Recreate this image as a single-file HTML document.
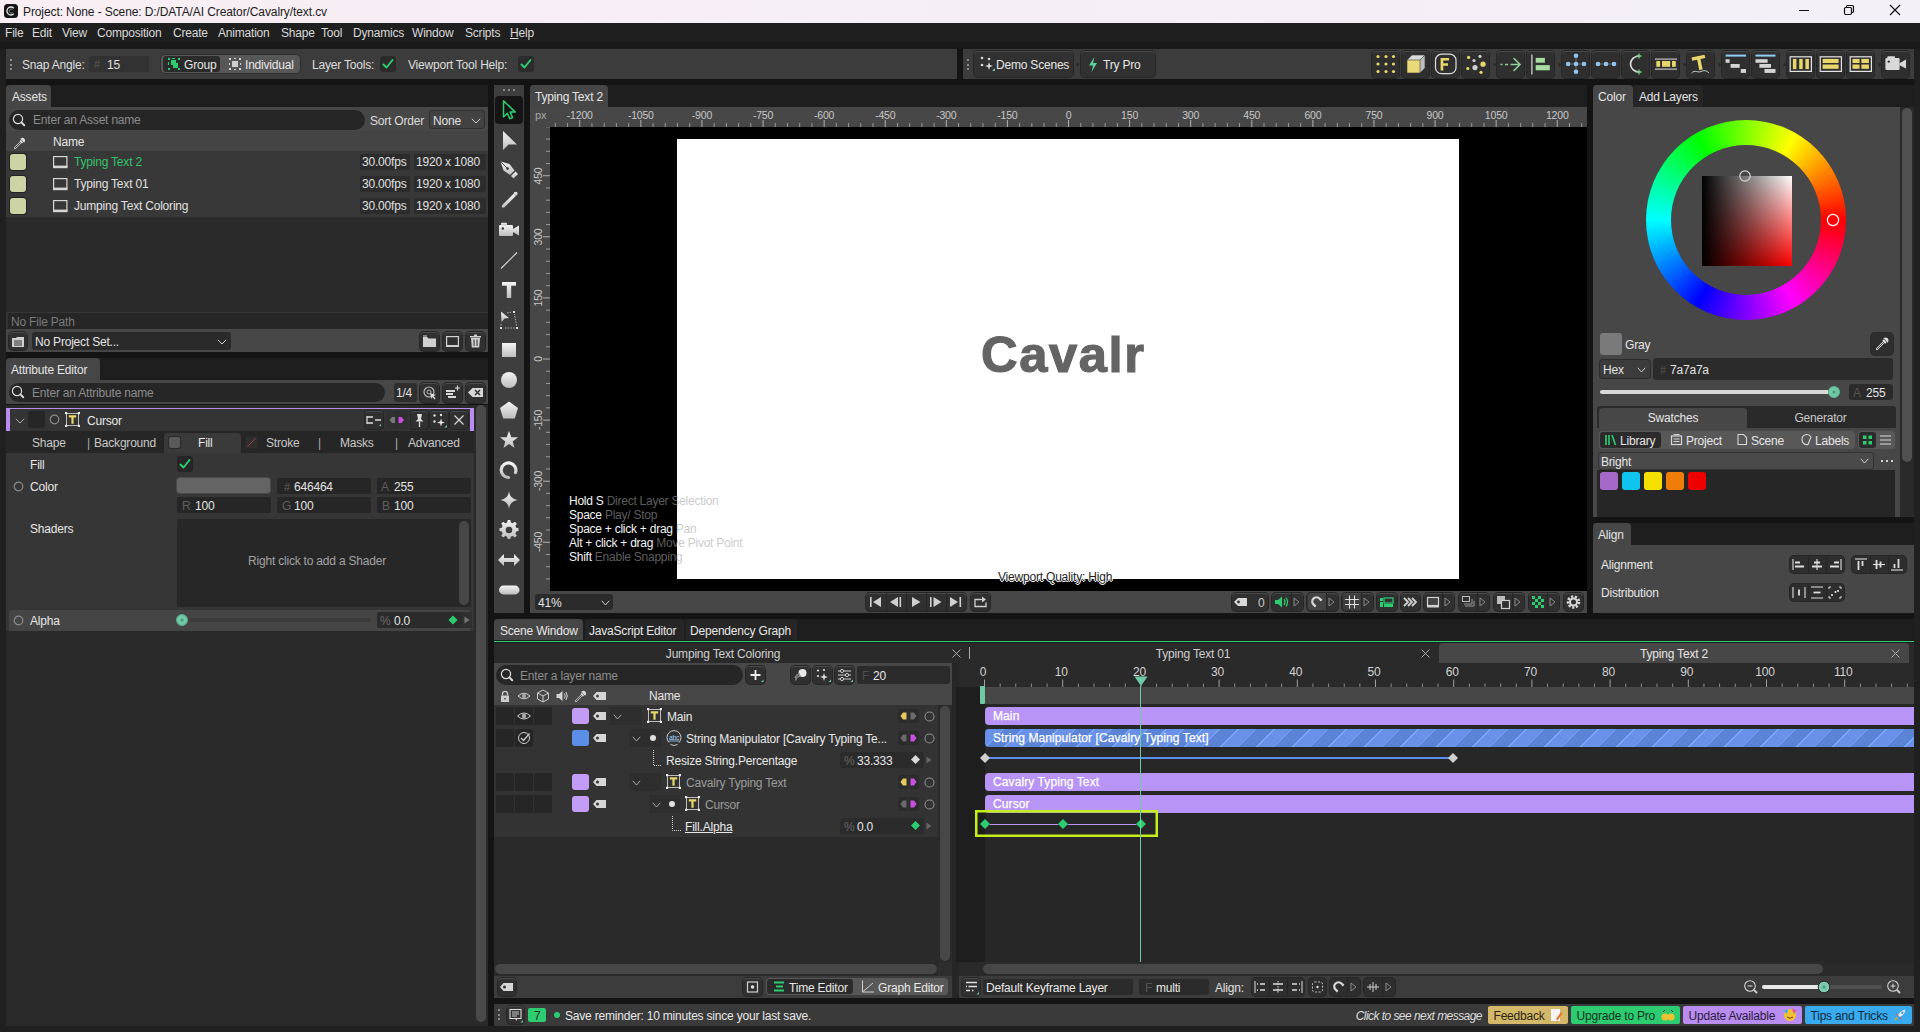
<!DOCTYPE html><html><head><meta charset="utf-8"><style>
html,body{margin:0;padding:0;}
body{width:1920px;height:1032px;overflow:hidden;position:relative;background:#202020;font-family:"Liberation Sans",sans-serif;}
.a{position:absolute;}
.t{white-space:nowrap;letter-spacing:-0.2px;}
</style></head><body>
<div class="a" style="left:0px;top:0px;width:1920px;height:23px;background:linear-gradient(to right,#f8eef4,#f6eff5 40%,#f3f0f7);"></div>
<svg class="a" style="left:3px;top:3px;" width="16" height="16" viewBox="0 0 16 16"><rect x="1" y="1" width="14" height="14" rx="3.5" fill="#151515"/><path d="M10.8 5.2 A4 4 0 1 0 10.8 10.8" fill="none" stroke="#e8e8e8" stroke-width="1.3"/><path d="M9.6 6.6 A2 2 0 1 0 9.6 9.4" fill="none" stroke="#999" stroke-width="0.8"/></svg>
<div class="a t" style="left:23px;top:5.84px;font-size:12px;line-height:12px;color:#1b1b1b;letter-spacing:-0.1px">Project: None - Scene: D:/DATA/AI Creator/Cavalry/text.cv</div>
<div class="a" style="left:1799px;top:10px;width:10px;height:1px;background:#111;"></div>
<svg class="a" style="left:1842px;top:3px;" width="14" height="14" viewBox="0 0 14 14"><rect x="2.5" y="4.5" width="7" height="7" rx="1.2" fill="none" stroke="#111" stroke-width="1.2"/><path d="M4.5 4.5 V3.8 a1.3 1.3 0 0 1 1.3-1.3 H10.2 a1.3 1.3 0 0 1 1.3 1.3 V8.2 a1.3 1.3 0 0 1 -1.3 1.3 H9.5" fill="none" stroke="#111" stroke-width="1.2"/></svg>
<svg class="a" style="left:1888px;top:3px;" width="14" height="14" viewBox="0 0 14 14"><path d="M2 2 L12 12 M12 2 L2 12" stroke="#111" stroke-width="1.2"/></svg>
<div class="a" style="left:0px;top:23px;width:1920px;height:19px;background:#1f1f1f;"></div>
<div class="a" style="left:0px;top:42px;width:1920px;height:7px;background:#1a1a1a;"></div>
<div class="a t" style="left:5px;top:26.84px;font-size:12px;line-height:12px;color:#d9d9d9;">File</div>
<div class="a t" style="left:32px;top:26.84px;font-size:12px;line-height:12px;color:#d9d9d9;">Edit</div>
<div class="a t" style="left:62px;top:26.84px;font-size:12px;line-height:12px;color:#d9d9d9;">View</div>
<div class="a t" style="left:97px;top:26.84px;font-size:12px;line-height:12px;color:#d9d9d9;">Composition</div>
<div class="a t" style="left:173px;top:26.84px;font-size:12px;line-height:12px;color:#d9d9d9;">Create</div>
<div class="a t" style="left:218px;top:26.84px;font-size:12px;line-height:12px;color:#d9d9d9;">Animation</div>
<div class="a t" style="left:281px;top:26.84px;font-size:12px;line-height:12px;color:#d9d9d9;">Shape</div>
<div class="a t" style="left:321px;top:26.84px;font-size:12px;line-height:12px;color:#d9d9d9;">Tool</div>
<div class="a t" style="left:353px;top:26.84px;font-size:12px;line-height:12px;color:#d9d9d9;">Dynamics</div>
<div class="a t" style="left:412px;top:26.84px;font-size:12px;line-height:12px;color:#d9d9d9;">Window</div>
<div class="a t" style="left:465px;top:26.84px;font-size:12px;line-height:12px;color:#d9d9d9;">Scripts</div>
<div class="a t" style="left:510px;top:26.84px;font-size:12px;line-height:12px;color:#d9d9d9;"><u>H</u>elp</div>
<div class="a" style="left:957px;top:49px;width:6px;height:30px;background:#141414;"></div>
<div class="a" style="left:6px;top:79px;width:1908px;height:947px;background:#141414;"></div>
<div class="a" style="left:6px;top:49px;width:951px;height:30px;background:#3c3c3c;"></div>
<div class="a" style="left:963px;top:49px;width:951px;height:30px;background:#3c3c3c;"></div>
<div class="a" style="left:10px;top:59.0px;width:2px;height:2px;background:#8a8a8a;"></div>
<div class="a" style="left:10px;top:63.5px;width:2px;height:2px;background:#8a8a8a;"></div>
<div class="a" style="left:10px;top:68.0px;width:2px;height:2px;background:#8a8a8a;"></div>
<div class="a t" style="left:22px;top:58.84px;font-size:12px;line-height:12px;color:#dedede;">Snap Angle:</div>
<div class="a" style="left:89px;top:56px;width:60px;height:16px;background:#323232;border-radius:3px"></div>
<div class="a t" style="left:94px;top:58.69px;font-size:11px;line-height:11px;color:#5c5c5c;">#</div>
<div class="a t" style="left:107px;top:58.84px;font-size:12px;line-height:12px;color:#e0e0e0;">15</div>
<div class="a" style="left:161px;top:55px;width:139px;height:18px;background:#575757;border-radius:4px;box-shadow:0 0 0 1px #2e2e2e"></div>
<div class="a" style="left:163px;top:56px;width:57px;height:16px;background:#2b2b2b;border-radius:3px"></div>
<svg class="a" style="left:167px;top:57px;" width="14" height="14" viewBox="0 0 14 14"><g fill="#2ecc71"><rect x="1" y="1" width="2" height="2"/><rect x="11" y="1" width="2" height="2"/><rect x="1" y="11" width="2" height="2"/><rect x="11" y="11" width="2" height="2"/><rect x="4" y="3" width="5" height="5"/><rect x="6" y="6" width="5" height="5"/><rect x="5" y="1" width="3" height="1"/><rect x="1" y="5" width="1" height="3"/></g></svg>
<div class="a t" style="left:184px;top:58.84px;font-size:12px;line-height:12px;color:#e6e6e6;">Group</div>
<svg class="a" style="left:228px;top:57px;" width="14" height="14" viewBox="0 0 14 14"><g fill="#cfcfcf"><rect x="1" y="1" width="2" height="2"/><rect x="11" y="1" width="2" height="2"/><rect x="1" y="11" width="2" height="2"/><rect x="11" y="11" width="2" height="2"/><rect x="4" y="4" width="6" height="6"/><rect x="6" y="1" width="2" height="1"/><rect x="6" y="12" width="2" height="1"/><rect x="1" y="6" width="1" height="2"/><rect x="12" y="6" width="1" height="2"/></g></svg>
<div class="a t" style="left:245px;top:58.84px;font-size:12px;line-height:12px;color:#e6e6e6;">Individual</div>
<div class="a t" style="left:312px;top:58.84px;font-size:12px;line-height:12px;color:#dedede;">Layer Tools:</div>
<div class="a" style="left:380px;top:56px;width:16px;height:16px;background:#2b2b2b;border-radius:3px"></div>
<svg class="a" style="left:380px;top:56px;" width="16" height="16" viewBox="0 0 16 16"><path d="M3.5 8.5 L6.5 11.5 L12.5 4" fill="none" stroke="#2ecc71" stroke-width="2" stroke-linecap="round" stroke-linejoin="round"/></svg>
<div class="a t" style="left:408px;top:58.84px;font-size:12px;line-height:12px;color:#dedede;">Viewport Tool Help:</div>
<div class="a" style="left:518px;top:56px;width:16px;height:16px;background:#2b2b2b;border-radius:3px"></div>
<svg class="a" style="left:518px;top:56px;" width="16" height="16" viewBox="0 0 16 16"><path d="M3.5 8.5 L6.5 11.5 L12.5 4" fill="none" stroke="#2ecc71" stroke-width="2" stroke-linecap="round" stroke-linejoin="round"/></svg>
<div class="a" style="left:967px;top:59.0px;width:2px;height:2px;background:#8a8a8a;"></div>
<div class="a" style="left:967px;top:63.5px;width:2px;height:2px;background:#8a8a8a;"></div>
<div class="a" style="left:967px;top:68.0px;width:2px;height:2px;background:#8a8a8a;"></div>
<div class="a" style="left:974px;top:51px;width:99px;height:26px;background:#313131;border-radius:4px;box-shadow:inset 0 1px 0 #484848, 0 0 0 1px #262626"></div>
<svg class="a" style="left:979px;top:55px;" width="18" height="18" viewBox="0 0 18 18"><g fill="#d8d8d8"><circle cx="3" cy="3" r="1.3"/><circle cx="10" cy="4" r="1.3"/><circle cx="3" cy="10" r="1.3"/><path d="M10 7 L11 10 L14 11 L11 12 L10 15 L9 12 L6 11 L9 10 Z"/></g><path d="M13 16 L16 13 L16 16 Z" fill="#6fc9a6"/></svg>
<div class="a t" style="left:996px;top:58.84px;font-size:12px;line-height:12px;color:#e6e6e6;">Demo Scenes</div>
<div class="a" style="left:1076px;top:63px;width:3px;height:3px;background:#2a2a2a;border-radius:2px"></div>
<div class="a" style="left:1081px;top:51px;width:74px;height:26px;background:#313131;border-radius:4px;box-shadow:inset 0 1px 0 #484848, 0 0 0 1px #262626"></div>
<svg class="a" style="left:1086px;top:56px;" width="14" height="17" viewBox="0 0 14 17"><path d="M8.5 1 L3 9.5 L7 9.5 L5.5 16 L11 7 L7 7 Z" fill="#5ed39a"/></svg>
<div class="a t" style="left:1103px;top:58.84px;font-size:12px;line-height:12px;color:#e6e6e6;">Try Pro</div>
<div class="a" style="left:1372px;top:51px;width:27px;height:27px;background:#2f2f2f;border-radius:4px;box-shadow:inset 0 1px 0 #484848, 0 0 0 1px #262626"></div>
<svg class="a" style="left:1372px;top:51px;" width="27" height="27" viewBox="0 0 27 27"><circle cx="6" cy="5.5" r="1.6" fill="#e9d66b"/><circle cx="6" cy="13" r="1.6" fill="#e9d66b"/><circle cx="6" cy="20.5" r="1.6" fill="#e9d66b"/><circle cx="14" cy="5.5" r="1.6" fill="#e9d66b"/><circle cx="14" cy="13" r="1.6" fill="#e9d66b"/><circle cx="14" cy="20.5" r="1.6" fill="#e9d66b"/><circle cx="21.5" cy="5.5" r="1.6" fill="#e9d66b"/><circle cx="21.5" cy="13" r="1.6" fill="#e9d66b"/><circle cx="21.5" cy="20.5" r="1.6" fill="#e9d66b"/></svg>
<div class="a" style="left:1402px;top:51px;width:27px;height:27px;background:#2f2f2f;border-radius:4px;box-shadow:inset 0 1px 0 #484848, 0 0 0 1px #262626"></div>
<svg class="a" style="left:1402px;top:51px;" width="27" height="27" viewBox="0 0 27 27"><polygon points="5,9 10,4 23,4 18,9" fill="#dadada"/><polygon points="18,9 23,4 23,17 18,22" fill="#bdbdbd"/><rect x="5" y="9" width="13" height="13" fill="#e9d978"/><path d="M5 9 L10 4 L23 4 L23 17 L18 22 L5 22 Z M5 9 H18 V22 M18 9 L23 4" fill="none" stroke="#3a3a3a" stroke-width="0.6"/></svg>
<div class="a" style="left:1432px;top:51px;width:27px;height:27px;background:#2f2f2f;border-radius:4px;box-shadow:inset 0 1px 0 #484848, 0 0 0 1px #262626"></div>
<svg class="a" style="left:1432px;top:51px;" width="27" height="27" viewBox="0 0 27 27"><rect x="3.5" y="3.2" width="20.5" height="19.5" rx="6" fill="none" stroke="#dedede" stroke-width="1.2"/><path d="M8.6 7 H17 V9.6 H11.3 V12.3 H16 V14.8 H11.3 V19.5 H8.6 Z" fill="#e9d66b"/></svg>
<div class="a" style="left:1462px;top:51px;width:27px;height:27px;background:#2f2f2f;border-radius:4px;box-shadow:inset 0 1px 0 #484848, 0 0 0 1px #262626"></div>
<svg class="a" style="left:1462px;top:51px;" width="27" height="27" viewBox="0 0 27 27"><circle cx="6.6" cy="6.4" r="1.6" fill="#e9d66b"/><circle cx="12" cy="9.6" r="1.6" fill="#cfcfcf"/><circle cx="18" cy="5.4" r="1.6" fill="#cfcfcf"/><circle cx="21" cy="13.2" r="2.6" fill="#e9d66b"/><circle cx="13" cy="16.6" r="2.6" fill="#cfcfcf"/><circle cx="5.8" cy="17.5" r="1.6" fill="#e9d66b"/><circle cx="19" cy="21.3" r="1.6" fill="#e9d66b"/></svg>
<div class="a" style="left:1497px;top:51px;width:27px;height:27px;background:#2f2f2f;border-radius:4px;box-shadow:inset 0 1px 0 #484848, 0 0 0 1px #262626"></div>
<svg class="a" style="left:1497px;top:51px;" width="27" height="27" viewBox="0 0 27 27"><path d="M3.5 13.5 H5.5 M8 13.5 H11 M13.5 13.5 H22.5" stroke="#8ed39b" stroke-width="1.6"/><path d="M17 7.5 L23 13.5 L17 19.5" fill="none" stroke="#8ed39b" stroke-width="1.6" stroke-linecap="round"/></svg>
<div class="a" style="left:1527px;top:51px;width:27px;height:27px;background:#2f2f2f;border-radius:4px;box-shadow:inset 0 1px 0 #484848, 0 0 0 1px #262626"></div>
<svg class="a" style="left:1527px;top:51px;" width="27" height="27" viewBox="0 0 27 27"><rect x="4.3" y="3.5" width="1.2" height="20" fill="#dcdcdc"/><rect x="8.7" y="6.9" width="9.2" height="4.8" fill="#a8dca3"/><rect x="8.7" y="14.1" width="14.1" height="5.2" fill="#a8dca3"/></svg>
<div class="a" style="left:1562px;top:51px;width:27px;height:27px;background:#2f2f2f;border-radius:4px;box-shadow:inset 0 1px 0 #484848, 0 0 0 1px #262626"></div>
<svg class="a" style="left:1562px;top:51px;" width="27" height="27" viewBox="0 0 27 27"><path d="M6 13 H22 M14 5 V21" stroke="#4c4c4c" stroke-width="2.2"/><circle cx="14" cy="4.8" r="2.3" fill="#8fc3f0"/><circle cx="6.1" cy="13" r="2.3" fill="#8fc3f0"/><circle cx="14" cy="13" r="2.3" fill="#8fc3f0"/><circle cx="22" cy="13" r="2.3" fill="#8fc3f0"/><circle cx="14" cy="20.7" r="2.3" fill="#8fc3f0"/></svg>
<div class="a" style="left:1592px;top:51px;width:27px;height:27px;background:#2f2f2f;border-radius:4px;box-shadow:inset 0 1px 0 #484848, 0 0 0 1px #262626"></div>
<svg class="a" style="left:1592px;top:51px;" width="27" height="27" viewBox="0 0 27 27"><path d="M6 13 H22" stroke="#4c4c4c" stroke-width="2.2"/><circle cx="6" cy="13" r="2.3" fill="#8fc3f0"/><circle cx="14" cy="13" r="2.3" fill="#8fc3f0"/><circle cx="22" cy="13" r="2.3" fill="#8fc3f0"/></svg>
<div class="a" style="left:1622px;top:51px;width:27px;height:27px;background:#2f2f2f;border-radius:4px;box-shadow:inset 0 1px 0 #484848, 0 0 0 1px #262626"></div>
<svg class="a" style="left:1622px;top:51px;" width="27" height="27" viewBox="0 0 27 27"><path d="M17 5 A8.5 8 0 0 0 17 21" fill="none" stroke="#d8d8d8" stroke-width="1.7"/><g stroke="#7fd08f" stroke-width="1.3"><path d="M14.5 5 H19.5 M17 2.5 V7.5 M14.5 21 H19.5 M17 18.5 V23.5"/></g></svg>
<div class="a" style="left:1652px;top:51px;width:27px;height:27px;background:#2f2f2f;border-radius:4px;box-shadow:inset 0 1px 0 #484848, 0 0 0 1px #262626"></div>
<svg class="a" style="left:1652px;top:51px;" width="27" height="27" viewBox="0 0 27 27"><rect x="3" y="7.6" width="22" height="1" fill="#e0e0e0"/><rect x="3" y="17.6" width="22" height="1" fill="#e0e0e0"/><rect x="4.3" y="10" width="3.8" height="5.8" fill="#e9d66b"/><rect x="10" y="10" width="8.2" height="5.8" fill="#e9d66b"/><rect x="20" y="10" width="3.8" height="5.8" fill="#e9d66b"/></svg>
<div class="a" style="left:1687px;top:51px;width:27px;height:27px;background:#2f2f2f;border-radius:4px;box-shadow:inset 0 1px 0 #484848, 0 0 0 1px #262626"></div>
<svg class="a" style="left:1687px;top:51px;" width="27" height="27" viewBox="0 0 27 27"><path d="M4.5 6.5 L17.5 3.8 L18.3 7 L13.5 8 L15.6 18.4 L12.2 19 L10.2 8.7 L5.2 9.7 Z" fill="#e9d66b"/><path d="M4.5 22 C8 18.5 11 22 14 20.5 C17 19 19.5 19.5 22 22" fill="none" stroke="#dcdcdc" stroke-width="0.9"/></svg>
<div class="a" style="left:1722px;top:51px;width:27px;height:27px;background:#2f2f2f;border-radius:4px;box-shadow:inset 0 1px 0 #484848, 0 0 0 1px #262626"></div>
<svg class="a" style="left:1722px;top:51px;" width="27" height="27" viewBox="0 0 27 27"><rect x="3.6" y="3.6" width="20.4" height="2" fill="#8ecff5"/><rect x="3.6" y="8.2" width="4" height="3.6" fill="#d4d4d4"/><rect x="8.6" y="13" width="9.1" height="3.8" fill="#d4d4d4"/><rect x="18.8" y="18" width="5.2" height="3.9" fill="#d4d4d4"/></svg>
<div class="a" style="left:1752px;top:51px;width:27px;height:27px;background:#2f2f2f;border-radius:4px;box-shadow:inset 0 1px 0 #484848, 0 0 0 1px #262626"></div>
<svg class="a" style="left:1752px;top:51px;" width="27" height="27" viewBox="0 0 27 27"><rect x="3.5" y="3.6" width="20" height="2" fill="#8ecff5"/><rect x="3.5" y="8.2" width="12.1" height="3.6" fill="#d4d4d4"/><rect x="7.4" y="13" width="11.6" height="3.8" fill="#d4d4d4"/><rect x="12.5" y="18" width="11" height="3.9" fill="#d4d4d4"/></svg>
<div class="a" style="left:1787px;top:51px;width:27px;height:27px;background:#2f2f2f;border-radius:4px;box-shadow:inset 0 1px 0 #484848, 0 0 0 1px #262626"></div>
<svg class="a" style="left:1787px;top:51px;" width="27" height="27" viewBox="0 0 27 27"><rect x="3.2" y="5.8" width="21.2" height="14.6" fill="none" stroke="#e4e4e4" stroke-width="1.2"/><rect x="5.9" y="7.9" width="3.5" height="10.2" fill="#e9d66b"/><rect x="12.2" y="7.9" width="3.5" height="10.2" fill="#e9d66b"/><rect x="18.4" y="7.9" width="3.5" height="10.2" fill="#e9d66b"/></svg>
<div class="a" style="left:1817px;top:51px;width:27px;height:27px;background:#2f2f2f;border-radius:4px;box-shadow:inset 0 1px 0 #484848, 0 0 0 1px #262626"></div>
<svg class="a" style="left:1817px;top:51px;" width="27" height="27" viewBox="0 0 27 27"><rect x="3.2" y="5.8" width="21.2" height="14.6" fill="none" stroke="#e4e4e4" stroke-width="1.2"/><rect x="5.6" y="7.9" width="16" height="4.1" fill="#e9d66b"/><rect x="5.6" y="13.5" width="16" height="4.3" fill="#e9d66b"/></svg>
<div class="a" style="left:1847px;top:51px;width:27px;height:27px;background:#2f2f2f;border-radius:4px;box-shadow:inset 0 1px 0 #484848, 0 0 0 1px #262626"></div>
<svg class="a" style="left:1847px;top:51px;" width="27" height="27" viewBox="0 0 27 27"><rect x="3.2" y="5.8" width="21.2" height="14.6" fill="none" stroke="#e4e4e4" stroke-width="1.2"/><rect x="5.5" y="7.9" width="7" height="4.1" fill="#e9d66b"/><rect x="14.4" y="7.9" width="7.5" height="4.1" fill="#e9d66b"/><rect x="5.5" y="13.5" width="7" height="4.3" fill="#e9d66b"/><rect x="14.4" y="13.5" width="7.5" height="4.3" fill="#e9d66b"/></svg>
<div class="a" style="left:1882px;top:51px;width:27px;height:27px;background:#2f2f2f;border-radius:4px;box-shadow:inset 0 1px 0 #484848, 0 0 0 1px #262626"></div>
<svg class="a" style="left:1882px;top:51px;" width="27" height="27" viewBox="0 0 27 27"><g fill="#d9d9d9"><rect x="3.4" y="7" width="14.2" height="12" rx="1.3"/><rect x="5.3" y="5.2" width="7.7" height="2.3" rx="0.8"/><path d="M17.5 12.2 L24 8.6 V17.6 L17.5 14.2 Z"/></g><circle cx="6.8" cy="10.6" r="1.2" fill="#333"/></svg>
<div class="a" style="left:1493px;top:63px;width:3px;height:3px;background:#2a2a2a;border-radius:2px"></div>
<div class="a" style="left:1558px;top:63px;width:3px;height:3px;background:#2a2a2a;border-radius:2px"></div>
<div class="a" style="left:1683px;top:63px;width:3px;height:3px;background:#2a2a2a;border-radius:2px"></div>
<div class="a" style="left:1718px;top:63px;width:3px;height:3px;background:#2a2a2a;border-radius:2px"></div>
<div class="a" style="left:1783px;top:63px;width:3px;height:3px;background:#2a2a2a;border-radius:2px"></div>
<div class="a" style="left:1878px;top:63px;width:3px;height:3px;background:#2a2a2a;border-radius:2px"></div>
<div class="a" style="left:6px;top:85px;width:482px;height:22px;background:#1e1e1e;"></div>
<div class="a" style="left:6px;top:85px;width:45px;height:22px;background:#464646;border-radius:4px 4px 0 0"></div>
<div class="a t" style="left:12px;top:90.84px;font-size:12px;line-height:12px;color:#e4e4e4;">Assets</div>
<div class="a" style="left:6px;top:107px;width:482px;height:24px;background:#474747;"></div>
<div class="a" style="left:9px;top:110px;width:356px;height:20px;background:#262626;border-radius:10px"></div>
<svg class="a" style="left:12px;top:113px;" width="14" height="14" viewBox="0 0 14 14"><circle cx="6" cy="6" r="4.6" fill="none" stroke="#dcdcdc" stroke-width="1.2"/><path d="M9.4 9.4 L12.2 12.2" stroke="#dcdcdc" stroke-width="2" stroke-linecap="round"/></svg>
<div class="a t" style="left:33px;top:113.84px;font-size:12px;line-height:12px;color:#8c8c8c;">Enter an Asset name</div>
<div class="a t" style="left:370px;top:114.84px;font-size:12px;line-height:12px;color:#dcdcdc;">Sort Order</div>
<div class="a" style="left:430px;top:111px;width:54px;height:17px;background:#424242;border-radius:3px;box-shadow:0 0 0 1px #303030"></div>
<div class="a t" style="left:433px;top:114.84px;font-size:12px;line-height:12px;color:#e0e0e0;">None</div>
<svg class="a" style="left:471px;top:118px;" width="10" height="6" viewBox="0 0 10 6"><path d="M0.8 0.8 L5.0 5 L9.2 0.8" fill="none" stroke="#cfcfcf" stroke-width="1"/></svg>
<div class="a" style="left:6px;top:131px;width:482px;height:20px;background:#444444;"></div>
<svg class="a" style="left:13px;top:136px;" width="14" height="14" viewBox="0 0 14 14"><path d="M2 12 L8 6" stroke="#bbb" stroke-width="2.2" stroke-linecap="round"/><path d="M2 12 L8 6" stroke="#444" stroke-width="0.9"/><path d="M7 4.5 L9.5 7 M8.5 3 A1.8 1.8 0 0 1 11 5.5 Z" stroke="#ddd" stroke-width="1.6"/></svg>
<div class="a t" style="left:53px;top:135.84px;font-size:12px;line-height:12px;color:#e6e6e6;">Name</div>
<div class="a" style="left:6px;top:151px;width:482px;height:66px;background:#383838;"></div>
<div class="a" style="left:10px;top:154px;width:16px;height:16px;background:#cdd3a5;border-radius:3px;box-shadow:0 0 0 1px #222"></div>
<svg class="a" style="left:53px;top:156px;" width="15" height="13" viewBox="0 0 15 13"><rect x="0.6" y="0.6" width="13.3" height="10" fill="none" stroke="#d6d6d6" stroke-width="1.2"/><rect x="0" y="9.6" width="14.5" height="2.6" fill="#d6d6d6"/></svg>
<div class="a t" style="left:74px;top:156.34px;font-size:12px;line-height:12px;color:#35c46a;">Typing Text 2</div>
<div class="a" style="left:360px;top:154px;width:50px;height:16px;background:#2c2c2c;border-radius:2px"></div>
<div class="a t" style="left:362px;top:155.84px;font-size:12px;line-height:12px;color:#e0e0e0;">30.00fps</div>
<div class="a" style="left:414px;top:154px;width:72px;height:16px;background:#2c2c2c;border-radius:2px"></div>
<div class="a t" style="left:416px;top:155.84px;font-size:12px;line-height:12px;color:#e0e0e0;">1920 x 1080</div>
<div class="a" style="left:10px;top:176px;width:16px;height:16px;background:#cdd3a5;border-radius:3px;box-shadow:0 0 0 1px #222"></div>
<svg class="a" style="left:53px;top:178px;" width="15" height="13" viewBox="0 0 15 13"><rect x="0.6" y="0.6" width="13.3" height="10" fill="none" stroke="#d6d6d6" stroke-width="1.2"/><rect x="0" y="9.6" width="14.5" height="2.6" fill="#d6d6d6"/></svg>
<div class="a t" style="left:74px;top:178.34px;font-size:12px;line-height:12px;color:#e0e0e0;">Typing Text 01</div>
<div class="a" style="left:360px;top:176px;width:50px;height:16px;background:#2c2c2c;border-radius:2px"></div>
<div class="a t" style="left:362px;top:177.84px;font-size:12px;line-height:12px;color:#e0e0e0;">30.00fps</div>
<div class="a" style="left:414px;top:176px;width:72px;height:16px;background:#2c2c2c;border-radius:2px"></div>
<div class="a t" style="left:416px;top:177.84px;font-size:12px;line-height:12px;color:#e0e0e0;">1920 x 1080</div>
<div class="a" style="left:10px;top:198px;width:16px;height:16px;background:#cdd3a5;border-radius:3px;box-shadow:0 0 0 1px #222"></div>
<svg class="a" style="left:53px;top:200px;" width="15" height="13" viewBox="0 0 15 13"><rect x="0.6" y="0.6" width="13.3" height="10" fill="none" stroke="#d6d6d6" stroke-width="1.2"/><rect x="0" y="9.6" width="14.5" height="2.6" fill="#d6d6d6"/></svg>
<div class="a t" style="left:74px;top:200.34px;font-size:12px;line-height:12px;color:#e0e0e0;">Jumping Text Coloring</div>
<div class="a" style="left:360px;top:198px;width:50px;height:16px;background:#2c2c2c;border-radius:2px"></div>
<div class="a t" style="left:362px;top:199.84px;font-size:12px;line-height:12px;color:#e0e0e0;">30.00fps</div>
<div class="a" style="left:414px;top:198px;width:72px;height:16px;background:#2c2c2c;border-radius:2px"></div>
<div class="a t" style="left:416px;top:199.84px;font-size:12px;line-height:12px;color:#e0e0e0;">1920 x 1080</div>
<div class="a" style="left:6px;top:217px;width:482px;height:95px;background:#2a2a2a;"></div>
<div class="a" style="left:6px;top:312px;width:482px;height:17px;background:#262626;box-shadow:inset 0 1px 0 #363636, inset 2px 0 0 #333"></div>
<div class="a t" style="left:11px;top:315.84px;font-size:12px;line-height:12px;color:#7a7a7a;">No File Path</div>
<div class="a" style="left:6px;top:329px;width:482px;height:23px;background:#474747;"></div>
<div class="a" style="left:9px;top:332px;width:18px;height:18px;background:#303030;border-radius:4px;box-shadow:inset 0 1px 0 #4a4a4a, 0 0 0 1px #262626"></div>
<svg class="a" style="left:10px;top:334px;" width="16" height="15" viewBox="0 0 16 15"><path d="M2 4 H6 L7 3 H14 V13 H2 Z" fill="#cfcfcf"/><path d="M4 7 H12 M4 9 H12 M4 11 H12" stroke="#303030" stroke-width="1"/><path d="M4 7 H5 M4 9 H5 M4 11 H5" stroke="#cfcfcf" stroke-width="0"/></svg>
<div class="a" style="left:32px;top:332px;width:199px;height:18px;background:#2a2a2a;border-radius:3px"></div>
<div class="a t" style="left:35px;top:335.84px;font-size:12px;line-height:12px;color:#e4e4e4;">No Project Set...</div>
<svg class="a" style="left:217px;top:339px;" width="10" height="6" viewBox="0 0 10 6"><path d="M0.8 0.8 L5.0 5 L9.2 0.8" fill="none" stroke="#cfcfcf" stroke-width="1"/></svg>
<div class="a" style="left:420px;top:332px;width:19px;height:19px;background:#303030;border-radius:4px;box-shadow:inset 0 1px 0 #4a4a4a, 0 0 0 1px #262626"></div>
<svg class="a" style="left:420px;top:332px;" width="19" height="19" viewBox="0 0 19 19"><path d="M3 5 H7 L8.5 6.5 H16 V15 H3 Z" fill="#d0d0d0"/><path d="M3 4 H7" stroke="#d0d0d0"/></svg>
<div class="a" style="left:443px;top:332px;width:19px;height:19px;background:#303030;border-radius:4px;box-shadow:inset 0 1px 0 #4a4a4a, 0 0 0 1px #262626"></div>
<svg class="a" style="left:443px;top:332px;" width="19" height="19" viewBox="0 0 19 19"><rect x="3.6" y="4.6" width="11.8" height="9" fill="none" stroke="#d0d0d0" stroke-width="1.2"/><rect x="3" y="13" width="13" height="2" fill="#d0d0d0"/></svg>
<div class="a" style="left:466px;top:332px;width:19px;height:19px;background:#303030;border-radius:4px;box-shadow:inset 0 1px 0 #4a4a4a, 0 0 0 1px #262626"></div>
<svg class="a" style="left:466px;top:332px;" width="19" height="19" viewBox="0 0 19 19"><path d="M5 6 H14 L13.2 15.5 H5.8 Z" fill="#d0d0d0"/><rect x="4" y="4" width="11" height="1.5" fill="#d0d0d0"/><rect x="8" y="2.5" width="3" height="1.5" fill="#d0d0d0"/><path d="M8 7.5 V14 M11 7.5 V14" stroke="#303030" stroke-width="1"/></svg>
<div class="a" style="left:6px;top:352px;width:482px;height:6px;background:#141414;"></div>
<div class="a" style="left:6px;top:358px;width:482px;height:22px;background:#1e1e1e;"></div>
<div class="a" style="left:6px;top:358px;width:94px;height:22px;background:#464646;border-radius:4px 4px 0 0"></div>
<div class="a t" style="left:11px;top:363.84px;font-size:12px;line-height:12px;color:#e4e4e4;">Attribute Editor</div>
<div class="a" style="left:6px;top:380px;width:482px;height:24px;background:#474747;"></div>
<div class="a" style="left:9px;top:383px;width:376px;height:19px;background:#262626;border-radius:10px"></div>
<svg class="a" style="left:11px;top:385px;" width="14" height="14" viewBox="0 0 14 14"><circle cx="6" cy="6" r="4.6" fill="none" stroke="#dcdcdc" stroke-width="1.2"/><path d="M9.4 9.4 L12.2 12.2" stroke="#dcdcdc" stroke-width="2" stroke-linecap="round"/></svg>
<div class="a t" style="left:32px;top:386.84px;font-size:12px;line-height:12px;color:#8c8c8c;">Enter an Attribute name</div>
<div class="a" style="left:394px;top:383px;width:23px;height:19px;background:#2e2e2e;border-radius:3px"></div>
<div class="a t" style="left:396px;top:386.84px;font-size:12px;line-height:12px;color:#e0e0e0;">1/4</div>
<div class="a" style="left:420px;top:383px;width:19px;height:20px;background:#303030;border-radius:4px;box-shadow:inset 0 1px 0 #4a4a4a, 0 0 0 1px #262626"></div>
<svg class="a" style="left:420px;top:383px;" width="19" height="20" viewBox="0 0 19 20"><circle cx="9" cy="9" r="5" fill="none" stroke="#bbb" stroke-width="1.2"/><circle cx="9" cy="9" r="2" fill="none" stroke="#bbb" stroke-width="1"/><path d="M10 10 L16 12 L13.5 13 L15.5 15.5 L14.5 16.5 L12.5 14 L11.5 16 Z" fill="#ddd"/></svg>
<div class="a" style="left:443px;top:383px;width:19px;height:20px;background:#303030;border-radius:4px;box-shadow:inset 0 1px 0 #4a4a4a, 0 0 0 1px #262626"></div>
<svg class="a" style="left:443px;top:383px;" width="19" height="20" viewBox="0 0 19 20"><path d="M3 8 H12 M3 11 H10 M5 14 H13" stroke="#d8d8d8" stroke-width="1.8"/><path d="M12 5 H17 M14.5 2.5 V7.5" stroke="#d8d8d8" stroke-width="1.2"/></svg>
<div class="a" style="left:466px;top:383px;width:19px;height:20px;background:#303030;border-radius:4px;box-shadow:inset 0 1px 0 #4a4a4a, 0 0 0 1px #262626"></div>
<svg class="a" style="left:466px;top:383px;" width="19" height="20" viewBox="0 0 19 20"><path d="M2 9.5 L6.5 5 H17 V14 H6.5 Z" fill="#d8d8d8"/><path d="M9 7 L14 12 M14 7 L9 12" stroke="#303030" stroke-width="1.5"/></svg>
<div class="a" style="left:6px;top:405px;width:482px;height:621px;background:#2a2a2a;"></div>
<div class="a" style="left:6px;top:408px;width:468px;height:23px;background:#343434;"></div>
<div class="a" style="left:6px;top:408px;width:468px;height:1px;background:#b98cf0;"></div>
<div class="a" style="left:6px;top:408px;width:4px;height:23px;background:#b98cf0;"></div>
<div class="a" style="left:470px;top:408px;width:4px;height:23px;background:#b98cf0;"></div>
<svg class="a" style="left:15px;top:418px;" width="10" height="6" viewBox="0 0 10 6"><path d="M0.8 0.8 L5.0 5 L9.2 0.8" fill="none" stroke="#aaa" stroke-width="1"/></svg>
<div class="a" style="left:28px;top:411px;width:17px;height:17px;background:#262626;border-radius:3px"></div>
<svg class="a" style="left:49px;top:414px;" width="11" height="11" viewBox="0 0 11 11"><circle cx="5.5" cy="5.5" r="4.3" fill="none" stroke="#8a8a8a" stroke-width="1.2"/></svg>
<svg class="a" style="left:65px;top:412px;" width="15" height="15" viewBox="0 0 15 15"><rect x="1.5" y="1.5" width="12" height="12" fill="none" stroke="#bdbdbd" stroke-width="1"/><g fill="#f0f0f0"><rect x="0" y="0" width="2.2" height="2.2"/><rect x="12.8" y="0" width="2.2" height="2.2"/><rect x="0" y="12.8" width="2.2" height="2.2"/><rect x="12.8" y="12.8" width="2.2" height="2.2"/></g><path d="M3.8 3.2 H11.2 V5.4 H8.6 V11.8 H6.4 V5.4 H3.8 Z" fill="#e9d66b"/></svg>
<div class="a t" style="left:87px;top:414.84px;font-size:12px;line-height:12px;color:#e8e8e8;">Cursor</div>
<div class="a" style="left:365px;top:411px;width:18px;height:18px;background:#303030;border-radius:3px;box-shadow:inset 0 1px 0 #4a4a4a, 0 0 0 1px #262626"></div>
<svg class="a" style="left:365px;top:411px;" width="18" height="18" viewBox="0 0 18 18"><path d="M2 6 H8 M2 12 H8 M10 9 H16" stroke="#ddd" stroke-width="1.6"/><path d="M2 5 V13" stroke="#ddd" stroke-width="1.2"/><path d="M14 15 L16 13 V15 Z" fill="#6fc9a6"/></svg>
<div class="a" style="left:386px;top:411px;width:22px;height:18px;background:#303030;border-radius:3px"></div>
<div class="a" style="left:397px;top:411px;width:1px;height:18px;background:#2a2a2a;"></div>
<svg class="a" style="left:386px;top:411px;" width="22" height="18" viewBox="0 0 22 18"><path d="M9 6 V12 H6 L3.5 9 L6 6 Z" fill="#777"/><path d="M12.5 6 V12 H15.5 L18 9 L15.5 6 Z" fill="#c94fe0"/></svg>
<div class="a" style="left:411px;top:411px;width:17px;height:18px;background:#303030;border-radius:3px;box-shadow:inset 0 1px 0 #4a4a4a, 0 0 0 1px #262626"></div>
<svg class="a" style="left:411px;top:411px;" width="17" height="18" viewBox="0 0 17 18"><path d="M6 3 H11 L10 8 L12.5 10.5 H4.5 L7 8 Z" fill="#ddd"/><path d="M8.5 10.5 V16" stroke="#ddd" stroke-width="1.3"/></svg>
<div class="a" style="left:430px;top:411px;width:18px;height:18px;background:#303030;border-radius:3px;box-shadow:inset 0 1px 0 #4a4a4a, 0 0 0 1px #262626"></div>
<svg class="a" style="left:430px;top:411px;" width="18" height="18" viewBox="0 0 18 18"><g fill="#ddd"><circle cx="4.5" cy="4.5" r="1.2"/><circle cx="11" cy="4" r="1.2"/><circle cx="4.5" cy="10.5" r="1.2"/><path d="M11 7.5 L12 10.5 L15 11.5 L12 12.5 L11 15.5 L10 12.5 L7 11.5 L10 10.5 Z"/></g><path d="M14.5 16.5 L17 14 V16.5 Z" fill="#6fc9a6"/></svg>
<div class="a" style="left:450px;top:411px;width:18px;height:18px;background:#303030;border-radius:3px;box-shadow:inset 0 1px 0 #4a4a4a, 0 0 0 1px #262626"></div>
<svg class="a" style="left:450px;top:411px;" width="18" height="18" viewBox="0 0 18 18"><path d="M4.5 4.5 L13.5 13.5 M13.5 4.5 L4.5 13.5" stroke="#ddd" stroke-width="1.1"/></svg>
<div class="a" style="left:6px;top:431px;width:468px;height:22px;background:#262626;"></div>
<div class="a" style="left:164px;top:433px;width:77px;height:20px;background:#3a3a3a;border-radius:4px 4px 0 0"></div>
<div class="a t" style="left:32px;top:436.84px;font-size:12px;line-height:12px;color:#c8c8c8;">Shape</div>
<div class="a t" style="left:87px;top:436.84px;font-size:12px;line-height:12px;color:#aaa;">|</div>
<div class="a t" style="left:94px;top:436.84px;font-size:12px;line-height:12px;color:#c8c8c8;">Background</div>
<div class="a" style="left:169px;top:437px;width:11px;height:11px;background:#5a5a5a;border-radius:2px;box-shadow:0 0 0 1px #2a2a2a"></div>
<div class="a t" style="left:198px;top:436.84px;font-size:12px;line-height:12px;color:#e8e8e8;">Fill</div>
<svg class="a" style="left:245px;top:436px;" width="13" height="13" viewBox="0 0 13 13"><rect x="0.5" y="0.5" width="12" height="12" rx="2" fill="#2e2e2e"/><path d="M2.5 10.5 L10.5 2.5" stroke="#a04848" stroke-width="1"/></svg>
<div class="a t" style="left:266px;top:436.84px;font-size:12px;line-height:12px;color:#c8c8c8;">Stroke</div>
<div class="a t" style="left:318px;top:436.84px;font-size:12px;line-height:12px;color:#aaa;">|</div>
<div class="a t" style="left:340px;top:436.84px;font-size:12px;line-height:12px;color:#c8c8c8;">Masks</div>
<div class="a t" style="left:395px;top:436.84px;font-size:12px;line-height:12px;color:#aaa;">|</div>
<div class="a t" style="left:408px;top:436.84px;font-size:12px;line-height:12px;color:#c8c8c8;">Advanced</div>
<div class="a" style="left:6px;top:453px;width:468px;height:178px;background:#363636;"></div>
<div class="a t" style="left:30px;top:458.84px;font-size:12px;line-height:12px;color:#e6e6e6;">Fill</div>
<div class="a" style="left:177px;top:456px;width:16px;height:16px;background:#262626;border-radius:3px"></div>
<svg class="a" style="left:177px;top:456px;" width="16" height="16" viewBox="0 0 16 16"><path d="M3.5 8.5 L6.5 11.5 L12.5 4" fill="none" stroke="#2ecc71" stroke-width="2" stroke-linecap="round" stroke-linejoin="round"/></svg>
<svg class="a" style="left:13px;top:481px;" width="11" height="11" viewBox="0 0 11 11"><circle cx="5.5" cy="5.5" r="4.3" fill="none" stroke="#8a8a8a" stroke-width="1.2"/></svg>
<div class="a t" style="left:30px;top:480.84px;font-size:12px;line-height:12px;color:#e6e6e6;">Color</div>
<div class="a" style="left:177px;top:478px;width:93px;height:15px;background:#646464;border-radius:3px;box-shadow:0 0 0 1px #4a4a4a"></div>
<div class="a" style="left:277px;top:478px;width:94px;height:16px;background:#262626;border-radius:2px"></div>
<div class="a t" style="left:284px;top:481.69px;font-size:11px;line-height:11px;color:#5e5e5e;">#</div>
<div class="a t" style="left:294px;top:480.84px;font-size:12px;line-height:12px;color:#e2e2e2;">646464</div>
<div class="a" style="left:377px;top:478px;width:94px;height:16px;background:#262626;border-radius:2px"></div>
<div class="a t" style="left:381px;top:480.84px;font-size:12px;line-height:12px;color:#5e5e5e;">A</div>
<div class="a t" style="left:394px;top:480.84px;font-size:12px;line-height:12px;color:#e2e2e2;">255</div>
<div class="a" style="left:177px;top:497px;width:94px;height:16px;background:#262626;border-radius:2px"></div>
<div class="a t" style="left:182px;top:499.84px;font-size:12px;line-height:12px;color:#5e5e5e;">R</div>
<div class="a t" style="left:195px;top:499.84px;font-size:12px;line-height:12px;color:#e2e2e2;">100</div>
<div class="a" style="left:277px;top:497px;width:94px;height:16px;background:#262626;border-radius:2px"></div>
<div class="a t" style="left:282px;top:499.84px;font-size:12px;line-height:12px;color:#5e5e5e;">G</div>
<div class="a t" style="left:294px;top:499.84px;font-size:12px;line-height:12px;color:#e2e2e2;">100</div>
<div class="a" style="left:377px;top:497px;width:94px;height:16px;background:#262626;border-radius:2px"></div>
<div class="a t" style="left:382px;top:499.84px;font-size:12px;line-height:12px;color:#5e5e5e;">B</div>
<div class="a t" style="left:394px;top:499.84px;font-size:12px;line-height:12px;color:#e2e2e2;">100</div>
<div class="a t" style="left:30px;top:522.84px;font-size:12px;line-height:12px;color:#e6e6e6;">Shaders</div>
<div class="a" style="left:177px;top:519px;width:294px;height:88px;background:#272727;border-radius:2px"></div>
<div class="a" style="left:459px;top:521px;width:10px;height:84px;background:#474747;border-radius:5px"></div>
<div class="a t" style="left:248px;top:554.84px;font-size:12px;line-height:12px;color:#a2a2a2;">Right click to add a Shader</div>
<div class="a" style="left:9px;top:610px;width:462px;height:21px;background:#454545;border-radius:3px"></div>
<svg class="a" style="left:13px;top:615px;" width="11" height="11" viewBox="0 0 11 11"><circle cx="5.5" cy="5.5" r="4.3" fill="none" stroke="#8a8a8a" stroke-width="1.2"/></svg>
<div class="a t" style="left:30px;top:614.84px;font-size:12px;line-height:12px;color:#e6e6e6;">Alpha</div>
<div class="a" style="left:177px;top:618px;width:194px;height:4px;background:#3c3c3c;border-radius:2px"></div>
<svg class="a" style="left:175px;top:613px;" width="14" height="14" viewBox="0 0 14 14"><circle cx="7" cy="7" r="5.5" fill="#6fc9a6" stroke="#5aa88a" stroke-width="1"/><circle cx="7" cy="7" r="1.6" fill="#4d9a7c"/></svg>
<div class="a" style="left:377px;top:612px;width:85px;height:16px;background:#2b2b2b;border-radius:2px 0 0 2px"></div>
<div class="a t" style="left:380px;top:614.84px;font-size:12px;line-height:12px;color:#6a6a6a;">%</div>
<div class="a t" style="left:394px;top:614.84px;font-size:12px;line-height:12px;color:#e6e6e6;">0.0</div>
<svg class="a" style="left:447px;top:614px;" width="12" height="12" viewBox="0 0 12 12"><path d="M6 1.5 L10.5 6 L6 10.5 L1.5 6 Z" fill="#2ecc71"/></svg>
<div class="a" style="left:462px;top:612px;width:10px;height:16px;background:#303030;"></div>
<svg class="a" style="left:462px;top:614px;" width="10" height="12" viewBox="0 0 10 12"><path d="M2.5 2.5 L7.5 6 L2.5 9.5 Z" fill="#777"/></svg>
<div class="a" style="left:476px;top:405px;width:10px;height:617px;background:#4a4a4a;border-radius:5px"></div>
<div class="a" style="left:494px;top:85px;width:30px;height:528px;background:#3e3e3e;"></div>
<div class="a" style="left:503px;top:89px;width:2px;height:2px;background:#8a8a8a;"></div>
<div class="a" style="left:508px;top:89px;width:2px;height:2px;background:#8a8a8a;"></div>
<div class="a" style="left:513px;top:89px;width:2px;height:2px;background:#8a8a8a;"></div>
<div class="a" style="left:495px;top:96px;width:28px;height:28px;background:#151515;border-radius:4px"></div>
<svg width="0" height="0" style="position:absolute"><defs><linearGradient id="wg" x1="0" y1="0" x2="0" y2="1"><stop offset="0" stop-color="#f4f4f4"/><stop offset="1" stop-color="#bdbdbd"/></linearGradient></defs></svg>
<svg class="a" style="left:499px;top:100px;" width="21" height="21" viewBox="0 0 21 21"><path d="M4.5 0.8 L4.5 17 L8.3 13.3 L10.8 18.8 L13.6 17.6 L11.1 12.1 L16.3 12.1 Z" fill="none" stroke="#2ecc71" stroke-width="1.5" stroke-linejoin="round"/></svg>
<svg class="a" style="left:499px;top:130px;" width="21" height="21" viewBox="0 0 21 21"><path d="M4 1 L18 14.5 L9.5 14.5 L4 20 Z" fill="url(#wg)"/></svg>
<svg class="a" style="left:499px;top:160px;" width="21" height="21" viewBox="0 0 21 21"><path d="M1.5 1.5 L10.5 4 L15.5 10.5 L11 15 L4.5 10.5 Z" fill="url(#wg)"/><path d="M1.8 1.8 L8.3 8.3" stroke="#3e3e3e" stroke-width="0.9"/><circle cx="8.6" cy="8.6" r="1.3" fill="#3e3e3e"/><path d="M12 16 L16.5 11.5 L19 14 L14.5 18.5 Z" fill="url(#wg)"/></svg>
<svg class="a" style="left:499px;top:190px;" width="21" height="21" viewBox="0 0 21 21"><path d="M2 18.5 L3.2 15 L14.5 3.7 L16.8 6 L5.5 17.3 Z" fill="url(#wg)"/><circle cx="16.6" cy="3.8" r="2" fill="url(#wg)"/><path d="M2 18.5 L2.6 16.6 L3.9 17.9 Z" fill="#2a2a2a"/></svg>
<svg class="a" style="left:499px;top:220px;" width="21" height="21" viewBox="0 0 21 21"><rect x="0" y="5" width="14" height="11" rx="1.2" fill="url(#wg)"/><rect x="2" y="2.8" width="6" height="2.4" rx="0.8" fill="url(#wg)"/><path d="M14 9 L20 5.5 V15.5 L14 12 Z" fill="url(#wg)"/><circle cx="3.8" cy="8.5" r="1.2" fill="#333"/></svg>
<svg class="a" style="left:499px;top:250px;" width="21" height="21" viewBox="0 0 21 21"><path d="M2 18.5 L18 2.5" stroke="#d9d9d9" stroke-width="1.1"/></svg>
<svg class="a" style="left:499px;top:280px;" width="21" height="21" viewBox="0 0 21 21"><path d="M3 2 H17 V5.8 H12.2 V18 H7.8 V5.8 H3 Z" fill="url(#wg)"/></svg>
<svg class="a" style="left:499px;top:310px;" width="21" height="21" viewBox="0 0 21 21"><path d="M2 1.5 L10 8 L5.5 8.6 L2.5 12 Z" fill="url(#wg)"/><g fill="#ddd"><rect x="14" y="1" width="2" height="2"/><rect x="1" y="17" width="2" height="2"/><rect x="17" y="17" width="2" height="2"/></g><path d="M6 18 H16 M17.5 15.5 L15.5 4 M2 14 V16 M8 3 L13 2" stroke="#ccc" stroke-width="0.8" stroke-dasharray="1.5 1.2"/></svg>
<svg class="a" style="left:499px;top:340px;" width="21" height="21" viewBox="0 0 21 21"><rect x="3" y="3" width="14" height="14" fill="url(#wg)"/></svg>
<svg class="a" style="left:499px;top:370px;" width="21" height="21" viewBox="0 0 21 21"><circle cx="10" cy="10" r="8" fill="url(#wg)"/></svg>
<svg class="a" style="left:499px;top:400px;" width="21" height="21" viewBox="0 0 21 21"><path d="M10 1.5 L19 8 L15.8 18.5 H4.2 L1 8 Z" fill="url(#wg)"/></svg>
<svg class="a" style="left:499px;top:430px;" width="21" height="21" viewBox="0 0 21 21"><path d="M10 1 L12.3 7.2 L19 7.3 L13.7 11.4 L15.6 18 L10 14.1 L4.4 18 L6.3 11.4 L1 7.3 L7.7 7.2 Z" fill="url(#wg)"/></svg>
<svg class="a" style="left:499px;top:460px;" width="21" height="21" viewBox="0 0 21 21"><path d="M16.5 12.5 A7.3 7.3 0 1 0 9.5 17.5" fill="none" stroke="url(#wg)" stroke-width="3.2" stroke-linecap="round"/></svg>
<svg class="a" style="left:499px;top:490px;" width="21" height="21" viewBox="0 0 21 21"><path d="M10 1.5 Q11 9 18.5 10 Q11 11 10 18.5 Q9 11 1.5 10 Q9 9 10 1.5 Z" fill="url(#wg)"/></svg>
<svg class="a" style="left:499px;top:520px;" width="21" height="21" viewBox="0 0 21 21"><path d="M8.6 1 H11.4 L11.9 3.6 L14 4.5 L16.2 3 L18.2 5 L16.7 7.2 L17.6 9.3 L20 9.8 V12.6 L17.6 13.1 L16.7 15.2 L18.2 17.4 L16.2 19.4 L14 17.9 L11.9 18.8 L11.4 21 H8.6 L8.1 18.8 L6 17.9 L3.8 19.4 L1.8 17.4 L3.3 15.2 L2.4 13.1 L0 12.6 V9.8 L2.4 9.3 L3.3 7.2 L1.8 5 L3.8 3 L6 4.5 L8.1 3.6 Z" fill="url(#wg)" transform="translate(0.5,-1) scale(0.95)"/><circle cx="10" cy="10" r="3.3" fill="#3e3e3e"/></svg>
<svg class="a" style="left:498px;top:550px;" width="22" height="21" viewBox="0 0 22 21"><path d="M0 10 L6 4 V8 H16 V4 L22 10 L16 16 V12 H6 V16 Z" fill="url(#wg)"/></svg>
<svg class="a" style="left:499px;top:580px;" width="21" height="21" viewBox="0 0 21 21"><rect x="0" y="5.6" width="20.5" height="8.8" rx="4.4" fill="url(#wg)"/></svg>
<div class="a" style="left:530px;top:85px;width:1057px;height:22px;background:#1e1e1e;"></div>
<div class="a" style="left:530px;top:85px;width:78px;height:22px;background:#464646;border-radius:4px 4px 0 0"></div>
<div class="a t" style="left:535px;top:90.84px;font-size:12px;line-height:12px;color:#e4e4e4;">Typing Text 2</div>
<div class="a" style="left:530px;top:107px;width:1057px;height:20px;background:#474747;"></div>
<div class="a" style="left:530px;top:127px;width:20px;height:464px;background:#474747;"></div>
<div class="a" style="left:550px;top:127px;width:1037px;height:464px;background:#000000;"></div>
<div class="a t" style="left:535px;top:110.19px;font-size:11px;line-height:11px;color:#a8a8a8;">px</div>
<svg class="a" style="left:550px;top:107px;" width="1037" height="20" viewBox="0 0 1037 20"><rect x="4.81" y="16" width="1" height="4" fill="#9a9a9a"/><rect x="17.03" y="16" width="1" height="4" fill="#9a9a9a"/><rect x="29.25" y="13" width="1" height="7" fill="#b0b0b0"/><rect x="41.47" y="16" width="1" height="4" fill="#9a9a9a"/><rect x="53.69" y="16" width="1" height="4" fill="#9a9a9a"/><rect x="65.91" y="16" width="1" height="4" fill="#9a9a9a"/><rect x="78.13" y="16" width="1" height="4" fill="#9a9a9a"/><rect x="90.35" y="13" width="1" height="7" fill="#b0b0b0"/><rect x="102.56" y="16" width="1" height="4" fill="#9a9a9a"/><rect x="114.78" y="16" width="1" height="4" fill="#9a9a9a"/><rect x="127.00" y="16" width="1" height="4" fill="#9a9a9a"/><rect x="139.22" y="16" width="1" height="4" fill="#9a9a9a"/><rect x="151.44" y="13" width="1" height="7" fill="#b0b0b0"/><rect x="163.66" y="16" width="1" height="4" fill="#9a9a9a"/><rect x="175.88" y="16" width="1" height="4" fill="#9a9a9a"/><rect x="188.10" y="16" width="1" height="4" fill="#9a9a9a"/><rect x="200.31" y="16" width="1" height="4" fill="#9a9a9a"/><rect x="212.53" y="13" width="1" height="7" fill="#b0b0b0"/><rect x="224.75" y="16" width="1" height="4" fill="#9a9a9a"/><rect x="236.97" y="16" width="1" height="4" fill="#9a9a9a"/><rect x="249.19" y="16" width="1" height="4" fill="#9a9a9a"/><rect x="261.41" y="16" width="1" height="4" fill="#9a9a9a"/><rect x="273.63" y="13" width="1" height="7" fill="#b0b0b0"/><rect x="285.84" y="16" width="1" height="4" fill="#9a9a9a"/><rect x="298.06" y="16" width="1" height="4" fill="#9a9a9a"/><rect x="310.28" y="16" width="1" height="4" fill="#9a9a9a"/><rect x="322.50" y="16" width="1" height="4" fill="#9a9a9a"/><rect x="334.72" y="13" width="1" height="7" fill="#b0b0b0"/><rect x="346.94" y="16" width="1" height="4" fill="#9a9a9a"/><rect x="359.16" y="16" width="1" height="4" fill="#9a9a9a"/><rect x="371.38" y="16" width="1" height="4" fill="#9a9a9a"/><rect x="383.59" y="16" width="1" height="4" fill="#9a9a9a"/><rect x="395.81" y="13" width="1" height="7" fill="#b0b0b0"/><rect x="408.03" y="16" width="1" height="4" fill="#9a9a9a"/><rect x="420.25" y="16" width="1" height="4" fill="#9a9a9a"/><rect x="432.47" y="16" width="1" height="4" fill="#9a9a9a"/><rect x="444.69" y="16" width="1" height="4" fill="#9a9a9a"/><rect x="456.91" y="13" width="1" height="7" fill="#b0b0b0"/><rect x="469.13" y="16" width="1" height="4" fill="#9a9a9a"/><rect x="481.34" y="16" width="1" height="4" fill="#9a9a9a"/><rect x="493.56" y="16" width="1" height="4" fill="#9a9a9a"/><rect x="505.78" y="16" width="1" height="4" fill="#9a9a9a"/><rect x="518.00" y="13" width="1" height="7" fill="#b0b0b0"/><rect x="530.22" y="16" width="1" height="4" fill="#9a9a9a"/><rect x="542.44" y="16" width="1" height="4" fill="#9a9a9a"/><rect x="554.66" y="16" width="1" height="4" fill="#9a9a9a"/><rect x="566.87" y="16" width="1" height="4" fill="#9a9a9a"/><rect x="579.09" y="13" width="1" height="7" fill="#b0b0b0"/><rect x="591.31" y="16" width="1" height="4" fill="#9a9a9a"/><rect x="603.53" y="16" width="1" height="4" fill="#9a9a9a"/><rect x="615.75" y="16" width="1" height="4" fill="#9a9a9a"/><rect x="627.97" y="16" width="1" height="4" fill="#9a9a9a"/><rect x="640.19" y="13" width="1" height="7" fill="#b0b0b0"/><rect x="652.41" y="16" width="1" height="4" fill="#9a9a9a"/><rect x="664.62" y="16" width="1" height="4" fill="#9a9a9a"/><rect x="676.84" y="16" width="1" height="4" fill="#9a9a9a"/><rect x="689.06" y="16" width="1" height="4" fill="#9a9a9a"/><rect x="701.28" y="13" width="1" height="7" fill="#b0b0b0"/><rect x="713.50" y="16" width="1" height="4" fill="#9a9a9a"/><rect x="725.72" y="16" width="1" height="4" fill="#9a9a9a"/><rect x="737.94" y="16" width="1" height="4" fill="#9a9a9a"/><rect x="750.16" y="16" width="1" height="4" fill="#9a9a9a"/><rect x="762.37" y="13" width="1" height="7" fill="#b0b0b0"/><rect x="774.59" y="16" width="1" height="4" fill="#9a9a9a"/><rect x="786.81" y="16" width="1" height="4" fill="#9a9a9a"/><rect x="799.03" y="16" width="1" height="4" fill="#9a9a9a"/><rect x="811.25" y="16" width="1" height="4" fill="#9a9a9a"/><rect x="823.47" y="13" width="1" height="7" fill="#b0b0b0"/><rect x="835.69" y="16" width="1" height="4" fill="#9a9a9a"/><rect x="847.90" y="16" width="1" height="4" fill="#9a9a9a"/><rect x="860.12" y="16" width="1" height="4" fill="#9a9a9a"/><rect x="872.34" y="16" width="1" height="4" fill="#9a9a9a"/><rect x="884.56" y="13" width="1" height="7" fill="#b0b0b0"/><rect x="896.78" y="16" width="1" height="4" fill="#9a9a9a"/><rect x="909.00" y="16" width="1" height="4" fill="#9a9a9a"/><rect x="921.22" y="16" width="1" height="4" fill="#9a9a9a"/><rect x="933.44" y="16" width="1" height="4" fill="#9a9a9a"/><rect x="945.65" y="13" width="1" height="7" fill="#b0b0b0"/><rect x="957.87" y="16" width="1" height="4" fill="#9a9a9a"/><rect x="970.09" y="16" width="1" height="4" fill="#9a9a9a"/><rect x="982.31" y="16" width="1" height="4" fill="#9a9a9a"/><rect x="994.53" y="16" width="1" height="4" fill="#9a9a9a"/><rect x="1006.75" y="13" width="1" height="7" fill="#b0b0b0"/><rect x="1018.97" y="16" width="1" height="4" fill="#9a9a9a"/><rect x="1031.19" y="16" width="1" height="4" fill="#9a9a9a"/></svg>
<div class="a t" style="left:539.75px;top:109px;width:80px;text-align:center;font-size:10.5px;line-height:12px;color:#c8c8c8">-1200</div>
<div class="a t" style="left:600.85px;top:109px;width:80px;text-align:center;font-size:10.5px;line-height:12px;color:#c8c8c8">-1050</div>
<div class="a t" style="left:661.94px;top:109px;width:80px;text-align:center;font-size:10.5px;line-height:12px;color:#c8c8c8">-900</div>
<div class="a t" style="left:723.03px;top:109px;width:80px;text-align:center;font-size:10.5px;line-height:12px;color:#c8c8c8">-750</div>
<div class="a t" style="left:784.13px;top:109px;width:80px;text-align:center;font-size:10.5px;line-height:12px;color:#c8c8c8">-600</div>
<div class="a t" style="left:845.22px;top:109px;width:80px;text-align:center;font-size:10.5px;line-height:12px;color:#c8c8c8">-450</div>
<div class="a t" style="left:906.31px;top:109px;width:80px;text-align:center;font-size:10.5px;line-height:12px;color:#c8c8c8">-300</div>
<div class="a t" style="left:967.41px;top:109px;width:80px;text-align:center;font-size:10.5px;line-height:12px;color:#c8c8c8">-150</div>
<div class="a t" style="left:1028.50px;top:109px;width:80px;text-align:center;font-size:10.5px;line-height:12px;color:#c8c8c8">0</div>
<div class="a t" style="left:1089.59px;top:109px;width:80px;text-align:center;font-size:10.5px;line-height:12px;color:#c8c8c8">150</div>
<div class="a t" style="left:1150.69px;top:109px;width:80px;text-align:center;font-size:10.5px;line-height:12px;color:#c8c8c8">300</div>
<div class="a t" style="left:1211.78px;top:109px;width:80px;text-align:center;font-size:10.5px;line-height:12px;color:#c8c8c8">450</div>
<div class="a t" style="left:1272.87px;top:109px;width:80px;text-align:center;font-size:10.5px;line-height:12px;color:#c8c8c8">600</div>
<div class="a t" style="left:1333.97px;top:109px;width:80px;text-align:center;font-size:10.5px;line-height:12px;color:#c8c8c8">750</div>
<div class="a t" style="left:1395.06px;top:109px;width:80px;text-align:center;font-size:10.5px;line-height:12px;color:#c8c8c8">900</div>
<div class="a t" style="left:1456.15px;top:109px;width:80px;text-align:center;font-size:10.5px;line-height:12px;color:#c8c8c8">1050</div>
<div class="a t" style="left:1517.25px;top:109px;width:80px;text-align:center;font-size:10.5px;line-height:12px;color:#c8c8c8">1200</div>
<svg class="a" style="left:530px;top:127px;" width="20" height="464" viewBox="0 0 20 464"><rect x="16" y="451.44" width="4" height="1" fill="#9a9a9a"/><rect x="16" y="439.22" width="4" height="1" fill="#9a9a9a"/><rect x="16" y="427.00" width="4" height="1" fill="#9a9a9a"/><rect x="13" y="414.78" width="7" height="1" fill="#b0b0b0"/><rect x="16" y="402.56" width="4" height="1" fill="#9a9a9a"/><rect x="16" y="390.34" width="4" height="1" fill="#9a9a9a"/><rect x="16" y="378.12" width="4" height="1" fill="#9a9a9a"/><rect x="16" y="365.91" width="4" height="1" fill="#9a9a9a"/><rect x="13" y="353.69" width="7" height="1" fill="#b0b0b0"/><rect x="16" y="341.47" width="4" height="1" fill="#9a9a9a"/><rect x="16" y="329.25" width="4" height="1" fill="#9a9a9a"/><rect x="16" y="317.03" width="4" height="1" fill="#9a9a9a"/><rect x="16" y="304.81" width="4" height="1" fill="#9a9a9a"/><rect x="13" y="292.59" width="7" height="1" fill="#b0b0b0"/><rect x="16" y="280.37" width="4" height="1" fill="#9a9a9a"/><rect x="16" y="268.16" width="4" height="1" fill="#9a9a9a"/><rect x="16" y="255.94" width="4" height="1" fill="#9a9a9a"/><rect x="16" y="243.72" width="4" height="1" fill="#9a9a9a"/><rect x="13" y="231.50" width="7" height="1" fill="#b0b0b0"/><rect x="16" y="219.28" width="4" height="1" fill="#9a9a9a"/><rect x="16" y="207.06" width="4" height="1" fill="#9a9a9a"/><rect x="16" y="194.84" width="4" height="1" fill="#9a9a9a"/><rect x="16" y="182.63" width="4" height="1" fill="#9a9a9a"/><rect x="13" y="170.41" width="7" height="1" fill="#b0b0b0"/><rect x="16" y="158.19" width="4" height="1" fill="#9a9a9a"/><rect x="16" y="145.97" width="4" height="1" fill="#9a9a9a"/><rect x="16" y="133.75" width="4" height="1" fill="#9a9a9a"/><rect x="16" y="121.53" width="4" height="1" fill="#9a9a9a"/><rect x="13" y="109.31" width="7" height="1" fill="#b0b0b0"/><rect x="16" y="97.09" width="4" height="1" fill="#9a9a9a"/><rect x="16" y="84.88" width="4" height="1" fill="#9a9a9a"/><rect x="16" y="72.66" width="4" height="1" fill="#9a9a9a"/><rect x="16" y="60.44" width="4" height="1" fill="#9a9a9a"/><rect x="13" y="48.22" width="7" height="1" fill="#b0b0b0"/><rect x="16" y="36.00" width="4" height="1" fill="#9a9a9a"/><rect x="16" y="23.78" width="4" height="1" fill="#9a9a9a"/><rect x="16" y="11.56" width="4" height="1" fill="#9a9a9a"/><rect x="16" y="-0.66" width="4" height="1" fill="#9a9a9a"/></svg>
<div class="a t" style="left:497.5px;top:536.28px;width:80px;text-align:center;font-size:10.5px;line-height:12px;color:#c8c8c8;transform:rotate(-90deg)">-450</div>
<div class="a t" style="left:497.5px;top:475.19px;width:80px;text-align:center;font-size:10.5px;line-height:12px;color:#c8c8c8;transform:rotate(-90deg)">-300</div>
<div class="a t" style="left:497.5px;top:414.09px;width:80px;text-align:center;font-size:10.5px;line-height:12px;color:#c8c8c8;transform:rotate(-90deg)">-150</div>
<div class="a t" style="left:497.5px;top:353.00px;width:80px;text-align:center;font-size:10.5px;line-height:12px;color:#c8c8c8;transform:rotate(-90deg)">0</div>
<div class="a t" style="left:497.5px;top:291.91px;width:80px;text-align:center;font-size:10.5px;line-height:12px;color:#c8c8c8;transform:rotate(-90deg)">150</div>
<div class="a t" style="left:497.5px;top:230.81px;width:80px;text-align:center;font-size:10.5px;line-height:12px;color:#c8c8c8;transform:rotate(-90deg)">300</div>
<div class="a t" style="left:497.5px;top:169.72px;width:80px;text-align:center;font-size:10.5px;line-height:12px;color:#c8c8c8;transform:rotate(-90deg)">450</div>
<div class="a" style="left:677px;top:139px;width:782px;height:440px;background:#ffffff;"></div>
<div class="a t" style="left:981px;top:330.08px;font-size:50.7px;line-height:50.7px;color:#646464;font-weight:bold;letter-spacing:1.6px;-webkit-text-stroke:1.2px #646464">Cavalr</div>
<div class="a t" style="left:569px;top:494.84px;font-size:12px;line-height:12px;color:#f4f4f4;letter-spacing:-0.25px"><span style="color:#f4f4f4">Hold S</span> <span style="color:rgba(163,163,163,0.59)">Direct Layer Selection</span></div>
<div class="a t" style="left:569px;top:508.84px;font-size:12px;line-height:12px;color:#f4f4f4;letter-spacing:-0.25px"><span style="color:#f4f4f4">Space</span> <span style="color:rgba(163,163,163,0.59)">Play/ Stop</span></div>
<div class="a t" style="left:569px;top:522.84px;font-size:12px;line-height:12px;color:#f4f4f4;letter-spacing:-0.25px"><span style="color:#f4f4f4">Space + click + drag</span> <span style="color:rgba(163,163,163,0.59)">Pan</span></div>
<div class="a t" style="left:569px;top:536.84px;font-size:12px;line-height:12px;color:#f4f4f4;letter-spacing:-0.25px"><span style="color:#f4f4f4">Alt + click + drag</span> <span style="color:rgba(163,163,163,0.59)">Move Pivot Point</span></div>
<div class="a t" style="left:569px;top:550.84px;font-size:12px;line-height:12px;color:#f4f4f4;letter-spacing:-0.25px"><span style="color:#f4f4f4">Shift</span> <span style="color:rgba(163,163,163,0.59)">Enable Snapping</span></div>
<div class="a t" style="left:998px;top:570.54px;font-size:12px;line-height:12px;color:#1e1e1e;text-shadow:0 0 1px #fff,0 0 1px #fff,1px 0 0 #fff,-1px 0 0 #fff,0 1px 0 #fff,0 -1px 0 #fff">Viewport Quality: High</div>
<div class="a" style="left:530px;top:591px;width:1057px;height:22px;background:#474747;"></div>
<div class="a" style="left:535px;top:594px;width:78px;height:16px;background:#2b2b2b;border-radius:3px"></div>
<div class="a t" style="left:538px;top:596.84px;font-size:12px;line-height:12px;color:#e4e4e4;">41%</div>
<svg class="a" style="left:601px;top:600px;" width="9" height="6" viewBox="0 0 9 6"><path d="M0.8 0.8 L4.5 5 L8.2 0.8" fill="none" stroke="#cfcfcf" stroke-width="1"/></svg>
<div class="a" style="left:866px;top:593px;width:100px;height:18px;background:#303030;border-radius:4px;box-shadow:inset 0 1px 0 #4a4a4a, 0 0 0 1px #262626"></div>
<div class="a" style="left:886px;top:593px;width:1px;height:18px;background:#262626;"></div>
<div class="a" style="left:906px;top:593px;width:1px;height:18px;background:#262626;"></div>
<div class="a" style="left:926px;top:593px;width:1px;height:18px;background:#262626;"></div>
<div class="a" style="left:946px;top:593px;width:1px;height:18px;background:#262626;"></div>
<svg class="a" style="left:866px;top:593px;" width="20" height="18" viewBox="0 0 20 18"><rect x="4" y="4" width="1.6" height="10" fill="#d0d0d0"/><path d="M15 4 V14 L7 9 Z" fill="#d0d0d0"/></svg>
<svg class="a" style="left:886px;top:593px;" width="20" height="18" viewBox="0 0 20 18"><path d="M12 4 V14 L4 9 Z" fill="#d0d0d0"/><rect x="13.5" y="4" width="1.6" height="10" fill="#d0d0d0"/></svg>
<svg class="a" style="left:906px;top:593px;" width="20" height="18" viewBox="0 0 20 18"><path d="M6 4 V14 L14.5 9 Z" fill="#d0d0d0"/></svg>
<svg class="a" style="left:926px;top:593px;" width="20" height="18" viewBox="0 0 20 18"><rect x="4" y="4" width="1.6" height="10" fill="#d0d0d0"/><path d="M7.5 4 V14 L15.5 9 Z" fill="#d0d0d0"/></svg>
<svg class="a" style="left:946px;top:593px;" width="20" height="18" viewBox="0 0 20 18"><path d="M4 4 V14 L12 9 Z" fill="#d0d0d0"/><rect x="13.5" y="4" width="1.6" height="10" fill="#d0d0d0"/></svg>
<div class="a" style="left:971px;top:593px;width:19px;height:18px;background:#303030;border-radius:4px;box-shadow:inset 0 1px 0 #4a4a4a, 0 0 0 1px #262626"></div>
<svg class="a" style="left:971px;top:593px;" width="19" height="18" viewBox="0 0 19 18"><path d="M9 6.5 H4 V13.5 H15 V9.5" fill="none" stroke="#d0d0d0" stroke-width="1.3"/><path d="M11 3.5 L15 6.5 L11 9.5 Z" fill="#d0d0d0"/><path d="M9 6.5 H12" stroke="#d0d0d0" stroke-width="1.3"/></svg>
<div class="a" style="left:1232px;top:593px;width:36px;height:18px;background:#303030;border-radius:4px;box-shadow:inset 0 1px 0 #4a4a4a, 0 0 0 1px #262626"></div>
<svg class="a" style="left:1232px;top:593px;" width="36" height="18" viewBox="0 0 36 18"><path d="M2 9 L6 5 H15 V13 H6 Z" fill="#d8d8d8"/><circle cx="6.5" cy="9" r="1.4" fill="#303030"/></svg>
<div class="a t" style="left:1258px;top:596.85px;font-size:12px;line-height:12px;color:#c8c8c8">0</div>
<div class="a" style="left:1272px;top:593px;width:31px;height:18px;background:#303030;border-radius:4px;box-shadow:inset 0 1px 0 #4a4a4a, 0 0 0 1px #262626"></div>
<div class="a" style="left:1291px;top:593px;width:1px;height:18px;background:#262626;"></div>
<svg class="a" style="left:1291px;top:593px;" width="12" height="18" viewBox="0 0 12 18"><path d="M3 5 L8 9 L3 13 Z" fill="none" stroke="#8a8a8a" stroke-width="1"/></svg>
<svg class="a" style="left:1272px;top:593px;" width="19" height="18" viewBox="0 0 19 18"><path d="M3 7 H6 L10 3.5 V14.5 L6 11 H3 Z" fill="#2ecc71"/><path d="M12 6 Q14 9 12 12 M14 4.5 Q17 9 14 13.5" fill="none" stroke="#2ecc71" stroke-width="1.2"/></svg>
<div class="a" style="left:1307px;top:593px;width:31px;height:18px;background:#303030;border-radius:4px;box-shadow:inset 0 1px 0 #4a4a4a, 0 0 0 1px #262626"></div>
<div class="a" style="left:1326px;top:593px;width:1px;height:18px;background:#262626;"></div>
<svg class="a" style="left:1326px;top:593px;" width="12" height="18" viewBox="0 0 12 18"><path d="M3 5 L8 9 L3 13 Z" fill="none" stroke="#8a8a8a" stroke-width="1"/></svg>
<svg class="a" style="left:1307px;top:593px;" width="19" height="18" viewBox="0 0 19 18"></svg>
<div class="a" style="left:1308px;top:594px;width:18px;height:16px;background:#434343;border-radius:3px 0 0 3px"></div>
<svg class="a" style="left:1307px;top:593px;" width="19" height="18" viewBox="0 0 19 18"><path d="M14.6 7.65 L12.47 5.53 A4.2 4.2 0 0 0 6.53 11.47 L8.65 13.6" fill="none" stroke="#d8d8d8" stroke-width="2.3"/></svg>
<div class="a" style="left:1342px;top:593px;width:31px;height:18px;background:#303030;border-radius:4px;box-shadow:inset 0 1px 0 #4a4a4a, 0 0 0 1px #262626"></div>
<div class="a" style="left:1361px;top:593px;width:1px;height:18px;background:#262626;"></div>
<svg class="a" style="left:1361px;top:593px;" width="12" height="18" viewBox="0 0 12 18"><path d="M3 5 L8 9 L3 13 Z" fill="none" stroke="#8a8a8a" stroke-width="1"/></svg>
<svg class="a" style="left:1342px;top:593px;" width="19" height="18" viewBox="0 0 19 18"></svg>
<div class="a" style="left:1343px;top:594px;width:18px;height:16px;background:#3d3d3d;border-radius:3px 0 0 3px"></div>
<svg class="a" style="left:1342px;top:593px;" width="19" height="18" viewBox="0 0 19 18"><path d="M7.5 2.5 V15.5 M12.5 2.5 V15.5 M3 6.5 H17 M3 11.5 H17" stroke="#e0e0e0" stroke-width="1.1"/></svg>
<div class="a" style="left:1377px;top:593px;width:20px;height:18px;background:#303030;border-radius:4px;box-shadow:inset 0 1px 0 #4a4a4a, 0 0 0 1px #262626"></div>
<svg class="a" style="left:1377px;top:593px;" width="20" height="18" viewBox="0 0 20 18"><rect x="3" y="5" width="3" height="3" fill="#2ecc71"/><rect x="3" y="9" width="3" height="5" fill="#2ecc71"/><rect x="7" y="5" width="9" height="5" fill="none" stroke="#2ecc71" stroke-width="1.2"/><rect x="7" y="11" width="9" height="3" fill="#2ecc71"/></svg>
<div class="a" style="left:1401px;top:593px;width:19px;height:18px;background:#303030;border-radius:4px;box-shadow:inset 0 1px 0 #4a4a4a, 0 0 0 1px #262626"></div>
<svg class="a" style="left:1401px;top:593px;" width="19" height="18" viewBox="0 0 19 18"><path d="M3 5 L7 9 L3 13 M7 5 L11 9 L7 13 M11 5 L15 9 L11 13" fill="none" stroke="#d0d0d0" stroke-width="1.8"/></svg>
<div class="a" style="left:1424px;top:593px;width:30px;height:18px;background:#303030;border-radius:4px;box-shadow:inset 0 1px 0 #4a4a4a, 0 0 0 1px #262626"></div>
<div class="a" style="left:1442px;top:593px;width:1px;height:18px;background:#262626;"></div>
<svg class="a" style="left:1442px;top:593px;" width="12" height="18" viewBox="0 0 12 18"><path d="M3 5 L8 9 L3 13 Z" fill="none" stroke="#8a8a8a" stroke-width="1"/></svg>
<svg class="a" style="left:1424px;top:593px;" width="18" height="18" viewBox="0 0 18 18"><rect x="3.5" y="4.5" width="11" height="8" fill="#444" stroke="#d0d0d0" stroke-width="1.2"/><rect x="3" y="13" width="12" height="1.5" fill="#d0d0d0"/></svg>
<div class="a" style="left:1459px;top:593px;width:30px;height:18px;background:#303030;border-radius:4px;box-shadow:inset 0 1px 0 #4a4a4a, 0 0 0 1px #262626"></div>
<div class="a" style="left:1477px;top:593px;width:1px;height:18px;background:#262626;"></div>
<svg class="a" style="left:1477px;top:593px;" width="12" height="18" viewBox="0 0 12 18"><path d="M3 5 L8 9 L3 13 Z" fill="none" stroke="#8a8a8a" stroke-width="1"/></svg>
<svg class="a" style="left:1459px;top:593px;" width="18" height="18" viewBox="0 0 18 18"><rect x="3.5" y="3.5" width="7" height="5" fill="none" stroke="#bbb" stroke-width="1"/><path d="M5 11 H13 V6 M6 13 H15 V8" fill="none" stroke="#999" stroke-width="1"/></svg>
<div class="a" style="left:1494px;top:593px;width:30px;height:18px;background:#303030;border-radius:4px;box-shadow:inset 0 1px 0 #4a4a4a, 0 0 0 1px #262626"></div>
<div class="a" style="left:1512px;top:593px;width:1px;height:18px;background:#262626;"></div>
<svg class="a" style="left:1512px;top:593px;" width="12" height="18" viewBox="0 0 12 18"><path d="M3 5 L8 9 L3 13 Z" fill="none" stroke="#8a8a8a" stroke-width="1"/></svg>
<svg class="a" style="left:1494px;top:593px;" width="18" height="18" viewBox="0 0 18 18"><rect x="3" y="3" width="8" height="8" fill="#bbb"/><rect x="7.5" y="7.5" width="8" height="8" fill="#303030" stroke="#d0d0d0" stroke-width="1.2"/></svg>
<div class="a" style="left:1529px;top:593px;width:30px;height:18px;background:#303030;border-radius:4px;box-shadow:inset 0 1px 0 #4a4a4a, 0 0 0 1px #262626"></div>
<div class="a" style="left:1547px;top:593px;width:1px;height:18px;background:#262626;"></div>
<svg class="a" style="left:1547px;top:593px;" width="12" height="18" viewBox="0 0 12 18"><path d="M3 5 L8 9 L3 13 Z" fill="none" stroke="#8a8a8a" stroke-width="1"/></svg>
<svg class="a" style="left:1529px;top:593px;" width="18" height="18" viewBox="0 0 18 18"><rect x="3" y="3" width="3" height="3" fill="#2ecc71"/><rect x="3" y="9" width="3" height="3" fill="#2ecc71"/><rect x="6" y="6" width="3" height="3" fill="#2ecc71"/><rect x="6" y="12" width="3" height="3" fill="#2ecc71"/><rect x="9" y="3" width="3" height="3" fill="#2ecc71"/><rect x="9" y="9" width="3" height="3" fill="#2ecc71"/><rect x="12" y="6" width="3" height="3" fill="#2ecc71"/><rect x="12" y="12" width="3" height="3" fill="#2ecc71"/></svg>
<div class="a" style="left:1564px;top:593px;width:19px;height:18px;background:#303030;border-radius:4px;box-shadow:inset 0 1px 0 #4a4a4a, 0 0 0 1px #262626"></div>
<svg class="a" style="left:1564px;top:593px;" width="19" height="18" viewBox="0 0 19 18"><circle cx="9.5" cy="9" r="5.5" fill="none" stroke="#d8d8d8" stroke-width="2.6" stroke-dasharray="2.2 1.6"/><circle cx="9.5" cy="9" r="3.5" fill="none" stroke="#d8d8d8" stroke-width="2"/></svg>
<div class="a" style="left:1593px;top:85px;width:321px;height:22px;background:#1e1e1e;"></div>
<div class="a" style="left:1593px;top:85px;width:40px;height:22px;background:#474747;border-radius:4px 4px 0 0"></div>
<div class="a t" style="left:1598px;top:90.84px;font-size:12px;line-height:12px;color:#e4e4e4;">Color</div>
<div class="a" style="left:1633px;top:85px;width:70px;height:22px;background:#262626;border-radius:4px 4px 0 0"></div>
<div class="a t" style="left:1639px;top:90.84px;font-size:12px;line-height:12px;color:#e4e4e4;">Add Layers</div>
<div class="a" style="left:1593px;top:107px;width:307px;height:410px;background:#474747;"></div>
<div class="a" style="left:1900px;top:107px;width:14px;height:410px;background:#2a2a2a;"></div>
<div class="a" style="left:1902px;top:108px;width:10px;height:354px;background:#505050;border-radius:5px"></div>
<div class="a" style="left:1646px;top:120px;width:200px;height:200px;border-radius:50%;background:conic-gradient(hsl(90,100%,50%) 0deg,hsl(75,100%,50%) 15deg,hsl(60,100%,50%) 30deg,hsl(45,100%,50%) 45deg,hsl(30,100%,50%) 60deg,hsl(15,100%,50%) 75deg,hsl(0,100%,50%) 90deg,hsl(345,100%,50%) 105deg,hsl(330,100%,50%) 120deg,hsl(315,100%,50%) 135deg,hsl(300,100%,50%) 150deg,hsl(285,100%,50%) 165deg,hsl(270,100%,50%) 180deg,hsl(255,100%,50%) 195deg,hsl(240,100%,50%) 210deg,hsl(225,100%,50%) 225deg,hsl(210,100%,50%) 240deg,hsl(195,100%,50%) 255deg,hsl(180,100%,50%) 270deg,hsl(165,100%,50%) 285deg,hsl(150,100%,50%) 300deg,hsl(135,100%,50%) 315deg,hsl(120,100%,50%) 330deg,hsl(105,100%,50%) 345deg,hsl(90,100%,50%) 360deg)"></div>
<div class="a" style="left:1671px;top:145px;width:150px;height:150px;background:#474747;border-radius:50%"></div>
<div class="a" style="left:1702px;top:176px;width:90px;height:90px;background:linear-gradient(to right,#000,rgba(0,0,0,0)),linear-gradient(to bottom,#fff,#f00)"></div>
<svg class="a" style="left:1738px;top:169px;" width="14" height="14" viewBox="0 0 14 14"><circle cx="7" cy="7" r="5.2" fill="none" stroke="#d8d8d8" stroke-width="1.2"/></svg>
<svg class="a" style="left:1826px;top:213px;" width="14" height="14" viewBox="0 0 14 14"><circle cx="7" cy="7" r="5.6" fill="none" stroke="#ffffff" stroke-width="1.2"/></svg>
<div class="a" style="left:1600px;top:333px;width:22px;height:22px;background:#7a7a7a;border-radius:3px"></div>
<div class="a t" style="left:1625px;top:338.84px;font-size:12px;line-height:12px;color:#e6e6e6;">Gray</div>
<div class="a" style="left:1871px;top:333px;width:22px;height:22px;background:#2e2e2e;border-radius:4px;box-shadow:0 0 0 1px #2a2a2a"></div>
<svg class="a" style="left:1871px;top:333px;" width="22" height="22" viewBox="0 0 22 22"><path d="M6 16 L13 9" stroke="#ddd" stroke-width="2.2" stroke-linecap="round"/><path d="M6 16 L13 9" stroke="#2e2e2e" stroke-width="0.8"/><path d="M12 7 L15 10 M14 5.5 A2 2 0 0 1 16.5 8 Z" stroke="#ddd" stroke-width="1.8"/></svg>
<div class="a" style="left:1600px;top:360px;width:50px;height:18px;background:#3c3c3c;border-radius:3px;box-shadow:0 0 0 1px #2c2c2c"></div>
<div class="a t" style="left:1603px;top:363.84px;font-size:12px;line-height:12px;color:#e4e4e4;">Hex</div>
<svg class="a" style="left:1637px;top:367px;" width="9" height="6" viewBox="0 0 9 6"><path d="M0.8 0.8 L4.5 5 L8.2 0.8" fill="none" stroke="#cfcfcf" stroke-width="1"/></svg>
<div class="a" style="left:1653px;top:358px;width:240px;height:22px;background:#2b2b2b;border-radius:3px"></div>
<div class="a t" style="left:1660px;top:364.69px;font-size:11px;line-height:11px;color:#555;">#</div>
<div class="a t" style="left:1670px;top:363.84px;font-size:12px;line-height:12px;color:#e4e4e4;">7a7a7a</div>
<div class="a" style="left:1600px;top:390px;width:236px;height:4px;background:#d8d8d8;border-radius:2px"></div>
<svg class="a" style="left:1827px;top:385px;" width="14" height="14" viewBox="0 0 14 14"><circle cx="7" cy="7" r="5.6" fill="#6fc9a6" stroke="#5aa88a" stroke-width="1"/><circle cx="7" cy="7" r="1.6" fill="#4d9a7c"/></svg>
<div class="a" style="left:1849px;top:384px;width:44px;height:16px;background:#2b2b2b;border-radius:3px"></div>
<div class="a t" style="left:1853px;top:386.84px;font-size:12px;line-height:12px;color:#555;">A</div>
<div class="a t" style="left:1866px;top:386.84px;font-size:12px;line-height:12px;color:#e4e4e4;">255</div>
<div class="a" style="left:1597px;top:406px;width:299px;height:22px;background:#2a2a2a;border-radius:3px 3px 0 0"></div>
<div class="a" style="left:1599px;top:408px;width:148px;height:20px;background:#474747;border-radius:4px 4px 0 0"></div>
<div class="a t" style="left:1599px;top:411.8px;width:148px;text-align:center;font-size:12px;line-height:12px;color:#e6e6e6">Swatches</div>
<div class="a t" style="left:1747px;top:411.8px;width:147px;text-align:center;font-size:12px;line-height:12px;color:#c8c8c8">Generator</div>
<div class="a" style="left:1599px;top:431px;width:256px;height:18px;background:#585858;border-radius:3px"></div>
<div class="a" style="left:1600px;top:432px;width:61px;height:16px;background:#2b2b2b;border-radius:3px"></div>
<svg class="a" style="left:1604px;top:433px;" width="14" height="14" viewBox="0 0 14 14"><path d="M2 2 V12 M5 2 V12" stroke="#2ecc71" stroke-width="1.6"/><path d="M8 2 L11.5 12" stroke="#2ecc71" stroke-width="1.6"/></svg>
<div class="a t" style="left:1620px;top:434.84px;font-size:12px;line-height:12px;color:#e6e6e6;">Library</div>
<svg class="a" style="left:1670px;top:433px;" width="13" height="13" viewBox="0 0 13 13"><rect x="1.5" y="3" width="10" height="8.5" fill="none" stroke="#d8d8d8" stroke-width="1.2"/><path d="M3.5 1.5 H9.5 M3.5 6 H9.5 M3.5 8.5 H9.5" stroke="#d8d8d8" stroke-width="1"/></svg>
<div class="a t" style="left:1686px;top:434.84px;font-size:12px;line-height:12px;color:#e6e6e6;">Project</div>
<svg class="a" style="left:1736px;top:433px;" width="12" height="13" viewBox="0 0 12 13"><path d="M2 1.5 H7.5 L10.5 4.5 V11.5 H2 Z" fill="none" stroke="#d8d8d8" stroke-width="1.1"/></svg>
<div class="a t" style="left:1751px;top:434.84px;font-size:12px;line-height:12px;color:#e6e6e6;">Scene</div>
<svg class="a" style="left:1800px;top:433px;" width="13" height="13" viewBox="0 0 13 13"><path d="M2 6.5 A4.8 4.8 0 0 1 11 4 L8 11.5 A4.8 4.8 0 0 1 2 6.5 Z" fill="none" stroke="#d8d8d8" stroke-width="1.1"/></svg>
<div class="a t" style="left:1815px;top:434.84px;font-size:12px;line-height:12px;color:#e6e6e6;">Labels</div>
<div class="a" style="left:1858px;top:431px;width:37px;height:18px;background:#585858;border-radius:3px"></div>
<div class="a" style="left:1859px;top:432px;width:17px;height:16px;background:#2b2b2b;border-radius:3px"></div>
<svg class="a" style="left:1859px;top:432px;" width="17" height="16" viewBox="0 0 17 16"><g fill="#2ecc71"><rect x="4" y="3.5" width="3.5" height="3.5"/><rect x="9.5" y="3.5" width="3.5" height="3.5"/><rect x="4" y="9" width="3.5" height="3.5"/><rect x="9.5" y="9" width="3.5" height="3.5"/></g></svg>
<svg class="a" style="left:1877px;top:432px;" width="17" height="16" viewBox="0 0 17 16"><path d="M3 4 H14 M3 8 H14 M3 12 H14" stroke="#d8d8d8" stroke-width="1.2"/></svg>
<div class="a" style="left:1599px;top:453px;width:274px;height:16px;background:#4a4a4a;border-radius:3px;box-shadow:0 0 0 1px #333"></div>
<div class="a t" style="left:1601px;top:455.84px;font-size:12px;line-height:12px;color:#e6e6e6;">Bright</div>
<svg class="a" style="left:1860px;top:458px;" width="9" height="6" viewBox="0 0 9 6"><path d="M0.8 0.8 L4.5 5 L8.2 0.8" fill="none" stroke="#cfcfcf" stroke-width="1"/></svg>
<div class="a" style="left:1881px;top:460px;width:2px;height:2px;background:#d0d0d0;"></div>
<div class="a" style="left:1886px;top:460px;width:2px;height:2px;background:#d0d0d0;"></div>
<div class="a" style="left:1891px;top:460px;width:2px;height:2px;background:#d0d0d0;"></div>
<div class="a" style="left:1597px;top:470px;width:298px;height:47px;background:#262626;"></div>
<div class="a" style="left:1600px;top:472px;width:18px;height:18px;background:#a569c8;border-radius:3px"></div>
<div class="a" style="left:1622px;top:472px;width:18px;height:18px;background:#0fc5ef;border-radius:3px"></div>
<div class="a" style="left:1644px;top:472px;width:18px;height:18px;background:#f5e000;border-radius:3px"></div>
<div class="a" style="left:1666px;top:472px;width:18px;height:18px;background:#f07c0a;border-radius:3px"></div>
<div class="a" style="left:1688px;top:472px;width:18px;height:18px;background:#ef0000;border-radius:3px"></div>
<div class="a" style="left:1593px;top:517px;width:321px;height:6px;background:#141414;"></div>
<div class="a" style="left:1593px;top:523px;width:321px;height:22px;background:#1e1e1e;"></div>
<div class="a" style="left:1593px;top:523px;width:38px;height:22px;background:#474747;border-radius:4px 4px 0 0"></div>
<div class="a t" style="left:1598px;top:528.84px;font-size:12px;line-height:12px;color:#e4e4e4;">Align</div>
<div class="a" style="left:1593px;top:545px;width:321px;height:68px;background:#474747;"></div>
<div class="a t" style="left:1601px;top:558.84px;font-size:12px;line-height:12px;color:#e6e6e6;">Alignment</div>
<div class="a t" style="left:1601px;top:586.84px;font-size:12px;line-height:12px;color:#e6e6e6;">Distribution</div>
<div class="a" style="left:1790px;top:556px;width:54px;height:17px;background:#2e2e2e;border-radius:4px;box-shadow:0 0 0 1px #262626"></div>
<svg class="a" style="left:1790px;top:556px;" width="18" height="17" viewBox="0 0 18 17"><path d="M3 3 V14" stroke="#dedede" stroke-width="1.1"/><path d="M5 6.5 H10 M5 10.5 H14" stroke="#dedede" stroke-width="1.8"/></svg>
<div class="a" style="left:1808px;top:556px;width:1px;height:17px;background:#262626;"></div>
<svg class="a" style="left:1808px;top:556px;" width="18" height="17" viewBox="0 0 18 17"><path d="M9 3 V14" stroke="#dedede" stroke-width="1.1"/><path d="M6 6.5 H12 M4 10.5 H14" stroke="#dedede" stroke-width="1.8"/></svg>
<div class="a" style="left:1826px;top:556px;width:1px;height:17px;background:#262626;"></div>
<svg class="a" style="left:1826px;top:556px;" width="18" height="17" viewBox="0 0 18 17"><path d="M15 3 V14" stroke="#dedede" stroke-width="1.1"/><path d="M8 6.5 H13 M4 10.5 H13" stroke="#dedede" stroke-width="1.8"/></svg>
<div class="a" style="left:1852px;top:556px;width:54px;height:17px;background:#2e2e2e;border-radius:4px;box-shadow:0 0 0 1px #262626"></div>
<svg class="a" style="left:1852px;top:556px;" width="18" height="17" viewBox="0 0 18 17"><path d="M3 3 H15" stroke="#dedede" stroke-width="1.1"/><path d="M6.5 5 V14 M10.5 5 V10" stroke="#dedede" stroke-width="1.8"/></svg>
<div class="a" style="left:1870px;top:556px;width:1px;height:17px;background:#262626;"></div>
<svg class="a" style="left:1870px;top:556px;" width="18" height="17" viewBox="0 0 18 17"><path d="M3 8.5 H15" stroke="#dedede" stroke-width="1.1"/><path d="M6.5 4 V13 M10.5 5.5 V11.5" stroke="#dedede" stroke-width="1.8"/></svg>
<div class="a" style="left:1888px;top:556px;width:1px;height:17px;background:#262626;"></div>
<svg class="a" style="left:1888px;top:556px;" width="18" height="17" viewBox="0 0 18 17"><path d="M3 14 H15" stroke="#dedede" stroke-width="1.1"/><path d="M6.5 8 V12 M10.5 3 V12" stroke="#dedede" stroke-width="1.8"/></svg>
<div class="a" style="left:1790px;top:584px;width:54px;height:17px;background:#2e2e2e;border-radius:4px;box-shadow:0 0 0 1px #262626"></div>
<svg class="a" style="left:1790px;top:584px;" width="18" height="17" viewBox="0 0 18 17"><path d="M3 3 V14 M15 3 V14" stroke="#dedede" stroke-width="1.1"/><path d="M9 5.5 V11.5" stroke="#dedede" stroke-width="1.8"/></svg>
<div class="a" style="left:1808px;top:584px;width:1px;height:17px;background:#262626;"></div>
<svg class="a" style="left:1808px;top:584px;" width="18" height="17" viewBox="0 0 18 17"><path d="M3 3 H15 M3 14 H15" stroke="#dedede" stroke-width="1.1"/><path d="M5.5 8.5 H12.5" stroke="#dedede" stroke-width="1.8"/></svg>
<div class="a" style="left:1826px;top:584px;width:1px;height:17px;background:#262626;"></div>
<svg class="a" style="left:1826px;top:584px;" width="18" height="17" viewBox="0 0 18 17"><path d="M3 3 H5 M13 3 H15 M3 14 H5 M13 14 H15 M3 3 V5 M15 3 V5 M3 12 V14 M15 12 V14" stroke="#dedede" stroke-width="1"/><path d="M6 10 V12 M9.5 7 V9 M12 6 V8" stroke="#dedede" stroke-width="1.6"/></svg>
<div class="a" style="left:494px;top:619px;width:1420px;height:22px;background:#1e1e1e;"></div>
<div class="a" style="left:494px;top:619px;width:89px;height:22px;background:#464646;border-radius:4px 4px 0 0"></div>
<div class="a" style="left:585px;top:619px;width:99px;height:22px;background:#262626;border-radius:4px 4px 0 0"></div>
<div class="a" style="left:686px;top:619px;width:111px;height:22px;background:#262626;border-radius:4px 4px 0 0"></div>
<div class="a t" style="left:500px;top:624.84px;font-size:12px;line-height:12px;color:#e6e6e6;">Scene Window</div>
<div class="a t" style="left:589px;top:624.84px;font-size:12px;line-height:12px;color:#e6e6e6;">JavaScript Editor</div>
<div class="a t" style="left:690px;top:624.84px;font-size:12px;line-height:12px;color:#e6e6e6;">Dependency Graph</div>
<div class="a" style="left:494px;top:640px;width:1420px;height:3px;background:#1e1e1e;"></div>
<div class="a" style="left:494px;top:641px;width:1420px;height:1px;background:#2ecc71;"></div>
<div class="a" style="left:494px;top:643px;width:1420px;height:333px;background:#2a2a2a;"></div>
<div class="a t" style="left:494px;top:647.5px;width:458px;text-align:center;font-size:12px;line-height:12px;color:#cfcfcf">Jumping Text Coloring</div>
<svg class="a" style="left:951px;top:648px;" width="11" height="11" viewBox="0 0 11 11"><path d="M1.5 1.5 L9.5 9.5 M9.5 1.5 L1.5 9.5" stroke="#aaa" stroke-width="1"/></svg>
<div class="a" style="left:969px;top:647px;width:1px;height:12px;background:#aaa;"></div>
<div class="a" style="left:1439px;top:643px;width:470px;height:20px;background:#474747;border-radius:4px 4px 0 0"></div>
<div class="a t" style="left:958px;top:647.5px;width:470px;text-align:center;font-size:12px;line-height:12px;color:#cfcfcf">Typing Text 01</div>
<svg class="a" style="left:1420px;top:648px;" width="11" height="11" viewBox="0 0 11 11"><path d="M1.5 1.5 L9.5 9.5 M9.5 1.5 L1.5 9.5" stroke="#aaa" stroke-width="1"/></svg>
<div class="a t" style="left:1439px;top:647.5px;width:470px;text-align:center;font-size:12px;line-height:12px;color:#e6e6e6">Typing Text 2</div>
<svg class="a" style="left:1890px;top:648px;" width="11" height="11" viewBox="0 0 11 11"><path d="M1.5 1.5 L9.5 9.5 M9.5 1.5 L1.5 9.5" stroke="#aaa" stroke-width="1"/></svg>
<div class="a" style="left:494px;top:663px;width:458px;height:23px;background:#474747;"></div>
<div class="a" style="left:496px;top:665px;width:247px;height:20px;background:#262626;border-radius:10px"></div>
<svg class="a" style="left:500px;top:668px;" width="14" height="14" viewBox="0 0 14 14"><circle cx="6" cy="6" r="4.6" fill="none" stroke="#dcdcdc" stroke-width="1.2"/><path d="M9.4 9.4 L12.2 12.2" stroke="#dcdcdc" stroke-width="2" stroke-linecap="round"/></svg>
<div class="a t" style="left:520px;top:669.84px;font-size:12px;line-height:12px;color:#8c8c8c;">Enter a layer name</div>
<div class="a" style="left:746px;top:666px;width:19px;height:18px;background:#303030;border-radius:4px;box-shadow:inset 0 1px 0 #4a4a4a, 0 0 0 1px #262626"></div>
<svg class="a" style="left:746px;top:666px;" width="19" height="18" viewBox="0 0 19 18"><path d="M9.5 4 V14 M4.5 9 H14.5" stroke="#eee" stroke-width="1.8"/><path d="M15 16 L17.5 13.5 V16 Z" fill="#6fc9a6"/></svg>
<div class="a" style="left:791px;top:666px;width:19px;height:18px;background:#303030;border-radius:4px;box-shadow:inset 0 1px 0 #4a4a4a, 0 0 0 1px #262626"></div>
<svg class="a" style="left:791px;top:666px;" width="19" height="18" viewBox="0 0 19 18"><circle cx="11.5" cy="7" r="4" fill="#e8e8e8"/><path d="M4 12 A6 6 0 0 1 9 8 M4.5 14.5 A6 6 0 0 1 10 10" fill="none" stroke="#888" stroke-width="1.4"/></svg>
<div class="a" style="left:813px;top:666px;width:19px;height:18px;background:#303030;border-radius:4px;box-shadow:inset 0 1px 0 #4a4a4a, 0 0 0 1px #262626"></div>
<svg class="a" style="left:813px;top:666px;" width="19" height="18" viewBox="0 0 19 18"><g fill="#ddd"><circle cx="5" cy="4.5" r="1.1"/><circle cx="11" cy="4" r="1.1"/><circle cx="5" cy="10" r="1.1"/><path d="M11 7 L12 10 L15 11 L12 12 L11 15 L10 12 L7 11 L10 10 Z"/></g><path d="M15.5 16 L18 13.5 V16 Z" fill="#6fc9a6"/></svg>
<div class="a" style="left:835px;top:666px;width:19px;height:18px;background:#303030;border-radius:4px;box-shadow:inset 0 1px 0 #4a4a4a, 0 0 0 1px #262626"></div>
<svg class="a" style="left:835px;top:666px;" width="19" height="18" viewBox="0 0 19 18"><path d="M3 5 H16 M3 9 H16 M3 13 H16" stroke="#cfcfcf" stroke-width="1"/><g fill="#303030" stroke="#cfcfcf" stroke-width="1"><circle cx="7" cy="5" r="1.6"/><circle cx="12" cy="9" r="1.6"/><circle cx="7" cy="13" r="1.6"/></g><path d="M15.5 16 L18 13.5 V16 Z" fill="#6fc9a6"/></svg>
<div class="a" style="left:857px;top:666px;width:93px;height:18px;background:#2b2b2b;border-radius:3px"></div>
<div class="a t" style="left:862px;top:669.84px;font-size:12px;line-height:12px;color:#4e4e4e;">F</div>
<div class="a t" style="left:873px;top:669.84px;font-size:12px;line-height:12px;color:#e6e6e6;">20</div>
<div class="a" style="left:494px;top:686px;width:458px;height:19px;background:#474747;"></div>
<svg class="a" style="left:498px;top:689px;" width="14" height="14" viewBox="0 0 14 14"><path d="M4.5 6.5 V4.8 A2.5 2.5 0 0 1 9.5 4.8 V6.5" fill="none" stroke="#ccc" stroke-width="1.3"/><rect x="3" y="6.5" width="8" height="6.5" fill="#ccc"/><rect x="6.3" y="9" width="1.4" height="1.4" fill="#333"/></svg>
<svg class="a" style="left:517px;top:689px;" width="14" height="14" viewBox="0 0 14 14"><path d="M1 7 Q7 1.5 13 7 Q7 12.5 1 7 Z" fill="none" stroke="#cfcfcf" stroke-width="1"/><circle cx="7" cy="7" r="2" fill="#aaa"/></svg>
<svg class="a" style="left:536px;top:689px;" width="14" height="14" viewBox="0 0 14 14"><path d="M7 1 L12.5 4 V10 L7 13 L1.5 10 V4 Z M1.5 4 L7 7 L12.5 4 M7 7 V13" fill="none" stroke="#cfcfcf" stroke-width="1"/></svg>
<svg class="a" style="left:555px;top:689px;" width="14" height="14" viewBox="0 0 14 14"><path d="M1.5 5 H4 L7.5 2 V12 L4 9 H1.5 Z" fill="#d4d4d4"/><path d="M9.5 4.5 Q11 7 9.5 9.5 M11 3 Q13.5 7 11 11" fill="none" stroke="#d4d4d4" stroke-width="1"/></svg>
<svg class="a" style="left:574px;top:689px;" width="14" height="14" viewBox="0 0 14 14"><path d="M2 12 L8 6" stroke="#bbb" stroke-width="2.2" stroke-linecap="round"/><path d="M2 12 L8 6" stroke="#474747" stroke-width="0.9"/><path d="M7 4.5 L9.5 7 M8.5 3 A1.8 1.8 0 0 1 11 5.5 Z" stroke="#ddd" stroke-width="1.6"/></svg>
<svg class="a" style="left:592px;top:689px;" width="15" height="14" viewBox="0 0 15 14"><path d="M1 7 L4.5 3 H14 V11 H4.5 Z" fill="#d6d6d6"/><circle cx="5.5" cy="7" r="1.5" fill="#474747"/></svg>
<div class="a t" style="left:649px;top:689.84px;font-size:12px;line-height:12px;color:#e6e6e6;">Name</div>
<div class="a" style="left:494px;top:705px;width:444px;height:132px;background:#333333;"></div>
<div class="a" style="left:496px;top:707px;width:18px;height:18px;background:#262626;border-radius:2px"></div>
<div class="a" style="left:515px;top:707px;width:18px;height:18px;background:#262626;border-radius:2px"></div>
<svg class="a" style="left:515px;top:707px;" width="18" height="18" viewBox="0 0 18 18"><path d="M2.5 9 Q9 3 15.5 9 Q9 15 2.5 9 Z" fill="none" stroke="#cfcfcf" stroke-width="1"/><circle cx="9" cy="9" r="2.2" fill="#aaa"/></svg>
<div class="a" style="left:534px;top:707px;width:18px;height:18px;background:#262626;border-radius:2px"></div>
<div class="a" style="left:572px;top:708px;width:17px;height:16px;background:#c39cf7;border-radius:3px"></div>
<svg class="a" style="left:592px;top:708px;" width="15" height="16" viewBox="0 0 15 16"><path d="M1 8 L4.5 4 H14 V12 H4.5 Z" fill="#d6d6d6"/><circle cx="5.5" cy="8" r="1.5" fill="#333"/></svg>
<div class="a" style="left:610px;top:707px;width:32px;height:18px;background:#2e2e2e;border-radius:2px"></div>
<svg class="a" style="left:613px;top:714px;" width="9" height="6" viewBox="0 0 9 6"><path d="M0.8 0.8 L4.5 5 L8.2 0.8" fill="none" stroke="#aaa" stroke-width="1"/></svg>
<svg class="a" style="left:647px;top:708px;" width="16" height="16" viewBox="0 0 16 16"><rect x="1.5" y="1.5" width="12" height="12" fill="none" stroke="#bdbdbd" stroke-width="1"/><g fill="#f0f0f0"><rect x="0" y="0" width="2.2" height="2.2"/><rect x="12.8" y="0" width="2.2" height="2.2"/><rect x="0" y="12.8" width="2.2" height="2.2"/><rect x="12.8" y="12.8" width="2.2" height="2.2"/></g><path d="M3.8 3.2 H11.2 V5.4 H8.6 V11.8 H6.4 V5.4 H3.8 Z" fill="#e9d66b"/></svg>
<div class="a t" style="left:667px;top:710.84px;font-size:12px;line-height:12px;color:#e8e8e8;">Main</div>
<div class="a" style="left:898px;top:709px;width:21px;height:14px;background:#2b2b2b;border-radius:3px"></div>
<div class="a" style="left:908px;top:709px;width:1px;height:14px;background:#333;"></div>
<svg class="a" style="left:898px;top:709px;" width="21" height="14" viewBox="0 0 21 14"><path d="M8.5 3.5 V10.5 H5 L2.5 7 L5 3.5 Z" fill="#e6c860"/><path d="M12.5 3.5 V10.5 H16 L18.5 7 L16 3.5 Z" fill="#6a6a6a"/></svg>
<svg class="a" style="left:923.5px;top:710.5px;" width="11" height="11" viewBox="0 0 11 11"><circle cx="5.5" cy="5.5" r="4.5" fill="none" stroke="#8e8e8e" stroke-width="1.1"/></svg>
<div class="a" style="left:496px;top:729px;width:18px;height:18px;background:#262626;border-radius:2px"></div>
<div class="a" style="left:515px;top:729px;width:18px;height:18px;background:#262626;border-radius:2px"></div>
<svg class="a" style="left:515px;top:729px;" width="18" height="18" viewBox="0 0 18 18"><circle cx="9" cy="9" r="5.5" fill="none" stroke="#cfcfcf" stroke-width="1"/><path d="M6 9 L8.5 11.5 L14.5 4.5" fill="none" stroke="#cfcfcf" stroke-width="1.2"/></svg>
<div class="a" style="left:572px;top:730px;width:17px;height:16px;background:#5b8ee6;border-radius:3px"></div>
<svg class="a" style="left:592px;top:730px;" width="15" height="16" viewBox="0 0 15 16"><path d="M1 8 L4.5 4 H14 V12 H4.5 Z" fill="#d6d6d6"/><circle cx="5.5" cy="8" r="1.5" fill="#333"/></svg>
<div class="a" style="left:629px;top:729px;width:32px;height:18px;background:#2e2e2e;border-radius:2px"></div>
<svg class="a" style="left:632px;top:736px;" width="9" height="6" viewBox="0 0 9 6"><path d="M0.8 0.8 L4.5 5 L8.2 0.8" fill="none" stroke="#aaa" stroke-width="1"/></svg>
<div class="a" style="left:650px;top:735px;width:6px;height:6px;background:#e0e0e0;border-radius:50%"></div>
<svg class="a" style="left:666px;top:730px;" width="16" height="16" viewBox="0 0 16 16"><path d="M3 12.5 A7 7 0 1 1 13 12.5" fill="none" stroke="#c8c8c8" stroke-width="1"/><path d="M4.5 14.5 A7 7 0 0 0 11.5 14.5" fill="none" stroke="#c8c8c8" stroke-width="1"/><text x="8" y="10" font-size="6.8" font-family="Liberation Sans" text-anchor="middle" fill="#9fd0ff" letter-spacing="-0.3">abc</text><path d="M2.5 11 H13.5" stroke="#9fd0ff" stroke-width="0.8"/></svg>
<div class="a t" style="left:686px;top:732.84px;font-size:12px;line-height:12px;color:#e8e8e8;">String Manipulator [Cavalry Typing Te...</div>
<div class="a" style="left:898px;top:731px;width:21px;height:14px;background:#2b2b2b;border-radius:3px"></div>
<div class="a" style="left:908px;top:731px;width:1px;height:14px;background:#333;"></div>
<svg class="a" style="left:898px;top:731px;" width="21" height="14" viewBox="0 0 21 14"><path d="M8.5 3.5 V10.5 H5 L2.5 7 L5 3.5 Z" fill="#6a6a6a"/><path d="M12.5 3.5 V10.5 H16 L18.5 7 L16 3.5 Z" fill="#c94fe0"/></svg>
<svg class="a" style="left:923.5px;top:732.5px;" width="11" height="11" viewBox="0 0 11 11"><circle cx="5.5" cy="5.5" r="4.5" fill="none" stroke="#8e8e8e" stroke-width="1.1"/></svg>
<svg class="a" style="left:652px;top:750px;" width="10" height="19" viewBox="0 0 10 19"><path d="M1.5 0 V15.5 H10" fill="none" stroke="#d0d0d0" stroke-width="1" stroke-dasharray="1 1"/></svg>
<div class="a t" style="left:666px;top:754.84px;font-size:12px;line-height:12px;color:#e8e8e8;">Resize String.Percentage</div>
<div class="a" style="left:840px;top:752px;width:84px;height:16px;background:#2b2b2b;border-radius:3px"></div>
<div class="a t" style="left:844px;top:754.84px;font-size:12px;line-height:12px;color:#666;">%</div>
<div class="a t" style="left:857px;top:754.84px;font-size:12px;line-height:12px;color:#e6e6e6;">33.333</div>
<svg class="a" style="left:910px;top:754px;" width="11" height="11" viewBox="0 0 11 11"><path d="M5.5 1 L10 5.5 L5.5 10 L1 5.5 Z" fill="#d8d8d8"/></svg>
<svg class="a" style="left:924px;top:754px;" width="10" height="12" viewBox="0 0 10 12"><path d="M2.5 2.5 L7.5 6 L2.5 9.5 Z" fill="#666"/></svg>
<div class="a" style="left:496px;top:773px;width:18px;height:18px;background:#262626;border-radius:2px"></div>
<div class="a" style="left:515px;top:773px;width:18px;height:18px;background:#262626;border-radius:2px"></div>
<div class="a" style="left:534px;top:773px;width:18px;height:18px;background:#262626;border-radius:2px"></div>
<div class="a" style="left:572px;top:774px;width:17px;height:16px;background:#c39cf7;border-radius:3px"></div>
<svg class="a" style="left:592px;top:774px;" width="15" height="16" viewBox="0 0 15 16"><path d="M1 8 L4.5 4 H14 V12 H4.5 Z" fill="#d6d6d6"/><circle cx="5.5" cy="8" r="1.5" fill="#333"/></svg>
<div class="a" style="left:629px;top:773px;width:32px;height:18px;background:#2e2e2e;border-radius:2px"></div>
<svg class="a" style="left:632px;top:780px;" width="9" height="6" viewBox="0 0 9 6"><path d="M0.8 0.8 L4.5 5 L8.2 0.8" fill="none" stroke="#aaa" stroke-width="1"/></svg>
<svg class="a" style="left:666px;top:774px;" width="16" height="16" viewBox="0 0 16 16"><rect x="1.5" y="1.5" width="12" height="12" fill="none" stroke="#bdbdbd" stroke-width="1"/><g fill="#f0f0f0"><rect x="0" y="0" width="2.2" height="2.2"/><rect x="12.8" y="0" width="2.2" height="2.2"/><rect x="0" y="12.8" width="2.2" height="2.2"/><rect x="12.8" y="12.8" width="2.2" height="2.2"/></g><path d="M3.8 3.2 H11.2 V5.4 H8.6 V11.8 H6.4 V5.4 H3.8 Z" fill="#e9d66b"/></svg>
<div class="a t" style="left:686px;top:776.84px;font-size:12px;line-height:12px;color:#9c9c9c;">Cavalry Typing Text</div>
<div class="a" style="left:898px;top:775px;width:21px;height:14px;background:#2b2b2b;border-radius:3px"></div>
<div class="a" style="left:908px;top:775px;width:1px;height:14px;background:#333;"></div>
<svg class="a" style="left:898px;top:775px;" width="21" height="14" viewBox="0 0 21 14"><path d="M8.5 3.5 V10.5 H5 L2.5 7 L5 3.5 Z" fill="#e6c860"/><path d="M12.5 3.5 V10.5 H16 L18.5 7 L16 3.5 Z" fill="#c94fe0"/></svg>
<svg class="a" style="left:923.5px;top:776.5px;" width="11" height="11" viewBox="0 0 11 11"><circle cx="5.5" cy="5.5" r="4.5" fill="none" stroke="#8e8e8e" stroke-width="1.1"/></svg>
<div class="a" style="left:496px;top:795px;width:18px;height:18px;background:#262626;border-radius:2px"></div>
<div class="a" style="left:515px;top:795px;width:18px;height:18px;background:#262626;border-radius:2px"></div>
<div class="a" style="left:534px;top:795px;width:18px;height:18px;background:#262626;border-radius:2px"></div>
<div class="a" style="left:572px;top:796px;width:17px;height:16px;background:#c39cf7;border-radius:3px"></div>
<svg class="a" style="left:592px;top:796px;" width="15" height="16" viewBox="0 0 15 16"><path d="M1 8 L4.5 4 H14 V12 H4.5 Z" fill="#d6d6d6"/><circle cx="5.5" cy="8" r="1.5" fill="#333"/></svg>
<div class="a" style="left:649px;top:795px;width:31px;height:18px;background:#2e2e2e;border-radius:2px"></div>
<svg class="a" style="left:652px;top:802px;" width="9" height="6" viewBox="0 0 9 6"><path d="M0.8 0.8 L4.5 5 L8.2 0.8" fill="none" stroke="#aaa" stroke-width="1"/></svg>
<div class="a" style="left:669px;top:801px;width:6px;height:6px;background:#e0e0e0;border-radius:50%"></div>
<svg class="a" style="left:685px;top:796px;" width="16" height="16" viewBox="0 0 16 16"><rect x="1.5" y="1.5" width="12" height="12" fill="none" stroke="#bdbdbd" stroke-width="1"/><g fill="#f0f0f0"><rect x="0" y="0" width="2.2" height="2.2"/><rect x="12.8" y="0" width="2.2" height="2.2"/><rect x="0" y="12.8" width="2.2" height="2.2"/><rect x="12.8" y="12.8" width="2.2" height="2.2"/></g><path d="M3.8 3.2 H11.2 V5.4 H8.6 V11.8 H6.4 V5.4 H3.8 Z" fill="#e9d66b"/></svg>
<div class="a t" style="left:705px;top:798.84px;font-size:12px;line-height:12px;color:#9c9c9c;">Cursor</div>
<div class="a" style="left:898px;top:797px;width:21px;height:14px;background:#2b2b2b;border-radius:3px"></div>
<div class="a" style="left:908px;top:797px;width:1px;height:14px;background:#333;"></div>
<svg class="a" style="left:898px;top:797px;" width="21" height="14" viewBox="0 0 21 14"><path d="M8.5 3.5 V10.5 H5 L2.5 7 L5 3.5 Z" fill="#6a6a6a"/><path d="M12.5 3.5 V10.5 H16 L18.5 7 L16 3.5 Z" fill="#c94fe0"/></svg>
<svg class="a" style="left:923.5px;top:798.5px;" width="11" height="11" viewBox="0 0 11 11"><circle cx="5.5" cy="5.5" r="4.5" fill="none" stroke="#8e8e8e" stroke-width="1.1"/></svg>
<svg class="a" style="left:671px;top:816px;" width="11" height="18" viewBox="0 0 11 18"><path d="M1.5 0 V14.5 H11" fill="none" stroke="#d0d0d0" stroke-width="1" stroke-dasharray="1 1"/></svg>
<div class="a t" style="left:685px;top:820.84px;font-size:12px;line-height:12px;color:#e8e8e8;"><u>Fill.Alpha</u></div>
<div class="a" style="left:840px;top:818px;width:84px;height:16px;background:#2b2b2b;border-radius:3px"></div>
<div class="a t" style="left:844px;top:820.84px;font-size:12px;line-height:12px;color:#666;">%</div>
<div class="a t" style="left:857px;top:820.84px;font-size:12px;line-height:12px;color:#e6e6e6;">0.0</div>
<svg class="a" style="left:910px;top:820px;" width="11" height="11" viewBox="0 0 11 11"><path d="M5.5 1 L10 5.5 L5.5 10 L1 5.5 Z" fill="#2ecc71"/></svg>
<svg class="a" style="left:924px;top:820px;" width="10" height="12" viewBox="0 0 10 12"><path d="M2.5 2.5 L7.5 6 L2.5 9.5 Z" fill="#666"/></svg>
<div class="a" style="left:940px;top:706px;width:10px;height:255px;background:#474747;border-radius:5px"></div>
<div class="a" style="left:495px;top:964px;width:442px;height:10px;background:#474747;border-radius:5px"></div>
<div class="a" style="left:938px;top:962px;width:14px;height:14px;background:#2e2e2e;"></div>
<div class="a" style="left:952px;top:663px;width:7px;height:335px;background:#262626;"></div>
<div class="a" style="left:494px;top:976px;width:458px;height:22px;background:#3c3c3c;"></div>
<div class="a" style="left:498px;top:978px;width:18px;height:18px;background:#303030;border-radius:4px;box-shadow:inset 0 1px 0 #4a4a4a, 0 0 0 1px #262626"></div>
<svg class="a" style="left:498px;top:978px;" width="18" height="18" viewBox="0 0 18 18"><path d="M2 9 L5.5 5 H15 V13 H5.5 Z" fill="#d6d6d6"/><circle cx="6.5" cy="9" r="1.5" fill="#303030"/></svg>
<div class="a" style="left:743px;top:978px;width:19px;height:18px;background:#303030;border-radius:4px;box-shadow:inset 0 1px 0 #4a4a4a, 0 0 0 1px #262626"></div>
<svg class="a" style="left:743px;top:978px;" width="19" height="18" viewBox="0 0 19 18"><rect x="4.5" y="4" width="10" height="10" fill="none" stroke="#d0d0d0" stroke-width="1.2"/><circle cx="9.5" cy="9" r="1.8" fill="#e0e0e0"/></svg>
<div class="a" style="left:766px;top:978px;width:182px;height:17px;background:#585858;border-radius:4px"></div>
<div class="a" style="left:767px;top:979px;width:86px;height:15px;background:#2b2b2b;border-radius:3px"></div>
<svg class="a" style="left:771px;top:979px;" width="16" height="15" viewBox="0 0 16 15"><path d="M3 3.5 H13 M5 7.5 H12 M3 11.5 H13" stroke="#2ecc71" stroke-width="2"/></svg>
<div class="a t" style="left:789px;top:981.84px;font-size:12px;line-height:12px;color:#e8e8e8;">Time Editor</div>
<svg class="a" style="left:860px;top:979px;" width="16" height="15" viewBox="0 0 16 15"><path d="M2.5 1.5 V13 H14" fill="none" stroke="#d0d0d0" stroke-width="1"/><path d="M3 12.5 L13 4" stroke="#d0d0d0" stroke-width="1"/></svg>
<div class="a t" style="left:878px;top:981.84px;font-size:12px;line-height:12px;color:#e8e8e8;">Graph Editor</div>
<div class="a" style="left:959px;top:663px;width:955px;height:24px;background:#2a2a2a;"></div>
<div class="a" style="left:956px;top:687px;width:29px;height:275px;background:#1e1e1e;"></div>
<div class="a" style="left:985px;top:687px;width:929px;height:275px;background:#272727;"></div>
<svg class="a" style="left:959px;top:663px;" width="955" height="24" viewBox="0 0 955 24"><rect x="25.00" y="16.5" width="1" height="7.5" fill="#a0a0a0"/><rect x="40.64" y="20.5" width="1" height="3.5" fill="#8a8a8a"/><rect x="56.28" y="20.5" width="1" height="3.5" fill="#8a8a8a"/><rect x="71.92" y="20.5" width="1" height="3.5" fill="#8a8a8a"/><rect x="87.56" y="20.5" width="1" height="3.5" fill="#8a8a8a"/><rect x="103.20" y="16.5" width="1" height="7.5" fill="#a0a0a0"/><rect x="118.84" y="20.5" width="1" height="3.5" fill="#8a8a8a"/><rect x="134.48" y="20.5" width="1" height="3.5" fill="#8a8a8a"/><rect x="150.12" y="20.5" width="1" height="3.5" fill="#8a8a8a"/><rect x="165.76" y="20.5" width="1" height="3.5" fill="#8a8a8a"/><rect x="181.40" y="16.5" width="1" height="7.5" fill="#a0a0a0"/><rect x="197.04" y="20.5" width="1" height="3.5" fill="#8a8a8a"/><rect x="212.68" y="20.5" width="1" height="3.5" fill="#8a8a8a"/><rect x="228.32" y="20.5" width="1" height="3.5" fill="#8a8a8a"/><rect x="243.96" y="20.5" width="1" height="3.5" fill="#8a8a8a"/><rect x="259.60" y="16.5" width="1" height="7.5" fill="#a0a0a0"/><rect x="275.24" y="20.5" width="1" height="3.5" fill="#8a8a8a"/><rect x="290.88" y="20.5" width="1" height="3.5" fill="#8a8a8a"/><rect x="306.52" y="20.5" width="1" height="3.5" fill="#8a8a8a"/><rect x="322.16" y="20.5" width="1" height="3.5" fill="#8a8a8a"/><rect x="337.80" y="16.5" width="1" height="7.5" fill="#a0a0a0"/><rect x="353.44" y="20.5" width="1" height="3.5" fill="#8a8a8a"/><rect x="369.08" y="20.5" width="1" height="3.5" fill="#8a8a8a"/><rect x="384.72" y="20.5" width="1" height="3.5" fill="#8a8a8a"/><rect x="400.36" y="20.5" width="1" height="3.5" fill="#8a8a8a"/><rect x="416.00" y="16.5" width="1" height="7.5" fill="#a0a0a0"/><rect x="431.64" y="20.5" width="1" height="3.5" fill="#8a8a8a"/><rect x="447.28" y="20.5" width="1" height="3.5" fill="#8a8a8a"/><rect x="462.92" y="20.5" width="1" height="3.5" fill="#8a8a8a"/><rect x="478.56" y="20.5" width="1" height="3.5" fill="#8a8a8a"/><rect x="494.20" y="16.5" width="1" height="7.5" fill="#a0a0a0"/><rect x="509.84" y="20.5" width="1" height="3.5" fill="#8a8a8a"/><rect x="525.48" y="20.5" width="1" height="3.5" fill="#8a8a8a"/><rect x="541.12" y="20.5" width="1" height="3.5" fill="#8a8a8a"/><rect x="556.76" y="20.5" width="1" height="3.5" fill="#8a8a8a"/><rect x="572.40" y="16.5" width="1" height="7.5" fill="#a0a0a0"/><rect x="588.04" y="20.5" width="1" height="3.5" fill="#8a8a8a"/><rect x="603.68" y="20.5" width="1" height="3.5" fill="#8a8a8a"/><rect x="619.32" y="20.5" width="1" height="3.5" fill="#8a8a8a"/><rect x="634.96" y="20.5" width="1" height="3.5" fill="#8a8a8a"/><rect x="650.60" y="16.5" width="1" height="7.5" fill="#a0a0a0"/><rect x="666.24" y="20.5" width="1" height="3.5" fill="#8a8a8a"/><rect x="681.88" y="20.5" width="1" height="3.5" fill="#8a8a8a"/><rect x="697.52" y="20.5" width="1" height="3.5" fill="#8a8a8a"/><rect x="713.16" y="20.5" width="1" height="3.5" fill="#8a8a8a"/><rect x="728.80" y="16.5" width="1" height="7.5" fill="#a0a0a0"/><rect x="744.44" y="20.5" width="1" height="3.5" fill="#8a8a8a"/><rect x="760.08" y="20.5" width="1" height="3.5" fill="#8a8a8a"/><rect x="775.72" y="20.5" width="1" height="3.5" fill="#8a8a8a"/><rect x="791.36" y="20.5" width="1" height="3.5" fill="#8a8a8a"/><rect x="807.00" y="16.5" width="1" height="7.5" fill="#a0a0a0"/><rect x="822.64" y="20.5" width="1" height="3.5" fill="#8a8a8a"/><rect x="838.28" y="20.5" width="1" height="3.5" fill="#8a8a8a"/><rect x="853.92" y="20.5" width="1" height="3.5" fill="#8a8a8a"/><rect x="869.56" y="20.5" width="1" height="3.5" fill="#8a8a8a"/><rect x="885.20" y="16.5" width="1" height="7.5" fill="#a0a0a0"/><rect x="900.84" y="20.5" width="1" height="3.5" fill="#8a8a8a"/><rect x="916.48" y="20.5" width="1" height="3.5" fill="#8a8a8a"/><rect x="932.12" y="20.5" width="1" height="3.5" fill="#8a8a8a"/><rect x="947.76" y="20.5" width="1" height="3.5" fill="#8a8a8a"/></svg>
<div class="a t" style="left:953.00px;top:665.5px;width:60px;text-align:center;font-size:12px;line-height:12px;color:#d4d4d4">0</div>
<div class="a t" style="left:1031.20px;top:665.5px;width:60px;text-align:center;font-size:12px;line-height:12px;color:#d4d4d4">10</div>
<div class="a t" style="left:1109.40px;top:665.5px;width:60px;text-align:center;font-size:12px;line-height:12px;color:#d4d4d4">20</div>
<div class="a t" style="left:1187.60px;top:665.5px;width:60px;text-align:center;font-size:12px;line-height:12px;color:#d4d4d4">30</div>
<div class="a t" style="left:1265.80px;top:665.5px;width:60px;text-align:center;font-size:12px;line-height:12px;color:#d4d4d4">40</div>
<div class="a t" style="left:1344.00px;top:665.5px;width:60px;text-align:center;font-size:12px;line-height:12px;color:#d4d4d4">50</div>
<div class="a t" style="left:1422.20px;top:665.5px;width:60px;text-align:center;font-size:12px;line-height:12px;color:#d4d4d4">60</div>
<div class="a t" style="left:1500.40px;top:665.5px;width:60px;text-align:center;font-size:12px;line-height:12px;color:#d4d4d4">70</div>
<div class="a t" style="left:1578.60px;top:665.5px;width:60px;text-align:center;font-size:12px;line-height:12px;color:#d4d4d4">80</div>
<div class="a t" style="left:1656.80px;top:665.5px;width:60px;text-align:center;font-size:12px;line-height:12px;color:#d4d4d4">90</div>
<div class="a t" style="left:1735.00px;top:665.5px;width:60px;text-align:center;font-size:12px;line-height:12px;color:#d4d4d4">100</div>
<div class="a t" style="left:1813.20px;top:665.5px;width:60px;text-align:center;font-size:12px;line-height:12px;color:#d4d4d4">110</div>
<div class="a" style="left:985px;top:687px;width:929px;height:17px;background:#474747;"></div>
<div class="a" style="left:980px;top:686px;width:5px;height:18px;background:#6fc9a6;border-radius:1px"></div>
<div class="a" style="left:985px;top:707px;width:929px;height:18px;background:#b794f6;border-radius:4px 0 0 4px;"></div>
<div class="a t" style="left:993px;top:710.34px;font-size:12px;line-height:12px;color:#ffffff;letter-spacing:0.1px;-webkit-text-stroke:0.25px #fff">Main</div>
<div class="a" style="left:985px;top:729px;width:929px;height:18px;background:#5b8de6;border-radius:4px 0 0 4px;background:repeating-linear-gradient(135deg,#7aa8ff 0px,#7aa8ff 1.5px,#6991e8 1.5px,#6991e8 12.7px,#74a0f4 12.7px,#74a0f4 13.7px,#5b83d6 13.7px,#5b83d6 25.46px)"></div>
<div class="a t" style="left:993px;top:732.34px;font-size:12px;line-height:12px;color:#ffffff;letter-spacing:0.1px;-webkit-text-stroke:0.25px #fff">String Manipulator [Cavalry Typing Text]</div>
<div class="a" style="left:985px;top:757px;width:468px;height:1.5px;background:#5b8ee8;"></div>
<svg class="a" style="left:979px;top:752px;" width="12" height="12" viewBox="0 0 12 12"><path d="M6 1 L11 6 L6 11 L1 6 Z" fill="#cfcfcf"/></svg>
<svg class="a" style="left:1447px;top:752px;" width="12" height="12" viewBox="0 0 12 12"><path d="M6 1 L11 6 L6 11 L1 6 Z" fill="#cfcfcf"/></svg>
<div class="a" style="left:985px;top:773px;width:929px;height:18px;background:#b794f6;border-radius:4px 0 0 4px;"></div>
<div class="a t" style="left:993px;top:776.34px;font-size:12px;line-height:12px;color:#ffffff;letter-spacing:0.1px;-webkit-text-stroke:0.25px #fff">Cavalry Typing Text</div>
<div class="a" style="left:985px;top:795px;width:929px;height:18px;background:#b794f6;border-radius:4px 0 0 4px;"></div>
<div class="a t" style="left:993px;top:798.34px;font-size:12px;line-height:12px;color:#ffffff;letter-spacing:0.1px;-webkit-text-stroke:0.25px #fff">Cursor</div>
<div class="a" style="left:985px;top:823.5px;width:156px;height:1.5px;background:#b794f6;"></div>
<svg class="a" style="left:978.5px;top:818px;" width="12" height="12" viewBox="0 0 12 12"><path d="M6 1 L11 6 L6 11 L1 6 Z" fill="#2ecc71" stroke="#1e7a48" stroke-width="0.6"/></svg>
<svg class="a" style="left:1056.7px;top:818px;" width="12" height="12" viewBox="0 0 12 12"><path d="M6 1 L11 6 L6 11 L1 6 Z" fill="#2ecc71" stroke="#1e7a48" stroke-width="0.6"/></svg>
<svg class="a" style="left:1134.9px;top:818px;" width="12" height="12" viewBox="0 0 12 12"><path d="M6 1 L11 6 L6 11 L1 6 Z" fill="#2ecc71" stroke="#1e7a48" stroke-width="0.6"/></svg>
<div class="a" style="left:975px;top:810px;width:183px;height:27px;background:transparent;box-shadow:inset 0 0 0 2.5px #c4ee1c"></div>
<div class="a" style="left:1140.4px;top:686px;width:1px;height:276px;background:#6fc9a6;"></div>
<svg class="a" style="left:1133.9px;top:676px;" width="14" height="11" viewBox="0 0 14 11"><path d="M0.5 0.5 H13.5 L7 10 Z" fill="#6fc9a6"/></svg>
<div class="a" style="left:959px;top:962px;width:955px;height:14px;background:#2a2a2a;"></div>
<div class="a" style="left:983px;top:964px;width:840px;height:10px;background:#474747;border-radius:5px"></div>
<div class="a" style="left:959px;top:976px;width:955px;height:22px;background:#3c3c3c;"></div>
<div class="a" style="left:962px;top:978px;width:18px;height:18px;background:#303030;border-radius:4px;box-shadow:inset 0 1px 0 #4a4a4a, 0 0 0 1px #262626"></div>
<svg class="a" style="left:962px;top:978px;" width="18" height="18" viewBox="0 0 18 18"><path d="M4 4.5 H15 M6.5 8.5 H15 M4 12.5 H8" stroke="#e0e0e0" stroke-width="1.4"/><path d="M4 8.5 H5 M10 12.5 H11.5" stroke="#e0e0e0" stroke-width="1.4"/><path d="M14.5 16.5 L17 14 V16.5 Z" fill="#6fc9a6"/></svg>
<div class="a" style="left:983px;top:979px;width:150px;height:16px;background:#2b2b2b;border-radius:3px"></div>
<div class="a t" style="left:986px;top:981.84px;font-size:12px;line-height:12px;color:#e8e8e8;">Default Keyframe Layer</div>
<div class="a" style="left:1139px;top:979px;width:70px;height:16px;background:#2b2b2b;border-radius:3px"></div>
<div class="a t" style="left:1145px;top:981.84px;font-size:12px;line-height:12px;color:#555;">F</div>
<div class="a t" style="left:1156px;top:981.84px;font-size:12px;line-height:12px;color:#e8e8e8;">multi</div>
<div class="a t" style="left:1215px;top:981.84px;font-size:12px;line-height:12px;color:#e0e0e0;">Align:</div>
<div class="a" style="left:1252px;top:978px;width:52px;height:18px;background:#2e2e2e;border-radius:4px;box-shadow:0 0 0 1px #262626"></div>
<svg class="a" style="left:1252.0px;top:978px;" width="17" height="18" viewBox="0 0 17 18"><path d="M3 3 V15" stroke="#ddd" stroke-width="1"/><path d="M5 6 H6 M8 6 H13 M5 12 H6 M8 12 H13" stroke="#ddd" stroke-width="1.5"/></svg>
<div class="a" style="left:1269.3px;top:978px;width:1px;height:18px;background:#262626;"></div>
<svg class="a" style="left:1269.3px;top:978px;" width="17" height="18" viewBox="0 0 17 18"><path d="M9 3 V15" stroke="#ddd" stroke-width="1" stroke-dasharray="1.5 1"/><path d="M4 6 H14 M4 12 H14" stroke="#ddd" stroke-width="1.5"/></svg>
<div class="a" style="left:1286.6px;top:978px;width:1px;height:18px;background:#262626;"></div>
<svg class="a" style="left:1286.6px;top:978px;" width="17" height="18" viewBox="0 0 17 18"><path d="M15 3 V15" stroke="#ddd" stroke-width="1"/><path d="M5 6 H10 M12 6 H13 M5 12 H10 M12 12 H13" stroke="#ddd" stroke-width="1.5"/></svg>
<div class="a" style="left:1309px;top:978px;width:17px;height:18px;background:#2e2e2e;border-radius:4px;box-shadow:0 0 0 1px #262626"></div>
<svg class="a" style="left:1309px;top:978px;" width="17" height="18" viewBox="0 0 17 18"><rect x="3.5" y="4" width="10" height="10" rx="2" fill="none" stroke="#bbb" stroke-width="1" stroke-dasharray="2 1.5"/><circle cx="8.5" cy="9" r="1.2" fill="#ddd"/></svg>
<div class="a" style="left:1330px;top:978px;width:30px;height:18px;background:#2e2e2e;border-radius:4px;box-shadow:0 0 0 1px #262626"></div>
<div class="a" style="left:1347px;top:978px;width:1px;height:18px;background:#262626;"></div>
<svg class="a" style="left:1329px;top:978px;" width="19" height="18" viewBox="0 0 19 18"><path d="M14.6 7.65 L12.47 5.53 A4.2 4.2 0 0 0 6.53 11.47 L8.65 13.6" fill="none" stroke="#d8d8d8" stroke-width="2.3"/></svg>
<svg class="a" style="left:1348px;top:978px;" width="12" height="18" viewBox="0 0 12 18"><path d="M3 5 L8 9 L3 13 Z" fill="none" stroke="#8a8a8a" stroke-width="1"/></svg>
<div class="a" style="left:1364px;top:978px;width:31px;height:18px;background:#2e2e2e;border-radius:4px;box-shadow:0 0 0 1px #262626"></div>
<div class="a" style="left:1382px;top:978px;width:1px;height:18px;background:#262626;"></div>
<svg class="a" style="left:1364px;top:978px;" width="18" height="18" viewBox="0 0 18 18"><path d="M3 9 H15 M6 6 V12 M9 4 V14 M12 6 V12" stroke="#d0d0d0" stroke-width="1"/></svg>
<svg class="a" style="left:1383px;top:978px;" width="12" height="18" viewBox="0 0 12 18"><path d="M3 5 L8 9 L3 13 Z" fill="none" stroke="#8a8a8a" stroke-width="1"/></svg>
<svg class="a" style="left:1743px;top:979px;" width="16" height="16" viewBox="0 0 16 16"><circle cx="7" cy="7" r="5.3" fill="none" stroke="#d0d0d0" stroke-width="1.1"/><path d="M4.5 7 H9.5" stroke="#d0d0d0" stroke-width="1.1"/><path d="M11 11 L14 14" stroke="#d0d0d0" stroke-width="1.8"/></svg>
<div class="a" style="left:1762px;top:985px;width:120px;height:4px;background:#505050;border-radius:2px"></div>
<div class="a" style="left:1762px;top:985px;width:63px;height:4px;background:#e8e8e8;border-radius:2px"></div>
<svg class="a" style="left:1817px;top:980px;" width="14" height="14" viewBox="0 0 14 14"><circle cx="7" cy="7" r="5.8" fill="#7ccbb0" stroke="#2a2a2a" stroke-width="1"/><circle cx="7" cy="7" r="1.8" fill="#5a9e86"/></svg>
<svg class="a" style="left:1886px;top:979px;" width="16" height="16" viewBox="0 0 16 16"><circle cx="7" cy="7" r="5.3" fill="none" stroke="#d0d0d0" stroke-width="1.1"/><path d="M4.5 7 H9.5 M7 4.5 V9.5" stroke="#d0d0d0" stroke-width="1.1"/><path d="M11 11 L14 14" stroke="#d0d0d0" stroke-width="1.8"/></svg>
<div class="a" style="left:494px;top:998px;width:1420px;height:6px;background:#141414;"></div>
<div class="a" style="left:494px;top:1004px;width:1420px;height:22px;background:#3a3a3a;"></div>
<div class="a" style="left:498px;top:1009.0px;width:2px;height:2px;background:#8a8a8a;"></div>
<div class="a" style="left:498px;top:1013.5px;width:2px;height:2px;background:#8a8a8a;"></div>
<div class="a" style="left:498px;top:1018.0px;width:2px;height:2px;background:#8a8a8a;"></div>
<div class="a" style="left:507px;top:1006px;width:17px;height:18px;background:#303030;border-radius:4px;box-shadow:inset 0 1px 0 #4a4a4a, 0 0 0 1px #262626"></div>
<svg class="a" style="left:507px;top:1006px;" width="17" height="18" viewBox="0 0 17 18"><rect x="3" y="3.5" width="11" height="9" fill="none" stroke="#ddd" stroke-width="1.1"/><path d="M5 6 H12 M5 8 H12 M5 10 H10" stroke="#ddd" stroke-width="0.9"/><path d="M8 12.5 L10 15 V12.5" fill="#ddd"/><path d="M13.5 16.5 L16 14 V16.5 Z" fill="#6fc9a6"/></svg>
<div class="a" style="left:528px;top:1008px;width:18px;height:14px;background:#2ecc71;border-radius:2px"></div>
<div class="a t" style="left:534px;top:1009.84px;font-size:12px;line-height:12px;color:#1a3a26;">7</div>
<div class="a" style="left:554px;top:1012px;width:6px;height:6px;background:#2ecc71;border-radius:50%"></div>
<div class="a t" style="left:565px;top:1009.84px;font-size:12px;line-height:12px;color:#e8e8e8;">Save reminder: 10 minutes since your last save.</div>
<div class="a t" style="left:1282px;top:1009.84px;width:200px;text-align:right;font-size:12px;line-height:12px;color:#dcdcdc;font-style:italic;letter-spacing:-0.55px">Click to see next message</div>
<div class="a" style="left:1488px;top:1006px;width:80px;height:18px;background:#d4b86a;border-radius:2px"></div>
<div class="a t" style="left:1493.5px;top:1009.84px;font-size:12px;line-height:12px;color:#2a2416;">Feedback</div>
<div class="a" style="left:1549px;top:1008px;width:14px;height:14px"><svg width="14" height="14"><rect x="2" y="1" width="9" height="12" fill="#f4f4f4"/><path d="M7 11 L12 4 L13.5 5.5 L8.5 12.5 Z" fill="#e8752a"/></svg></div>
<div class="a" style="left:1571px;top:1006px;width:109px;height:18px;background:#2ecc71;border-radius:2px"></div>
<div class="a t" style="left:1576.5px;top:1009.84px;font-size:12px;line-height:12px;color:#10331f;">Upgrade to Pro</div>
<div class="a" style="left:1661px;top:1008px;width:14px;height:14px"><svg width="14" height="14"><circle cx="4" cy="9" r="3.5" fill="#f2c230"/><circle cx="10" cy="9" r="3.5" fill="#f2c230"/><path d="M2 4 L4 2 M12 4 L10 2" stroke="#333" stroke-width="1"/></svg></div>
<div class="a" style="left:1683px;top:1006px;width:119px;height:18px;background:#b98cf0;border-radius:2px"></div>
<div class="a t" style="left:1688.5px;top:1009.84px;font-size:12px;line-height:12px;color:#2a1d40;">Update Available</div>
<div class="a" style="left:1783px;top:1008px;width:14px;height:14px"><svg width="14" height="14"><circle cx="7" cy="7" r="6" fill="#f2c230"/><path d="M1 3 L5 1 L4 6 Z" fill="#3aaaee"/><path d="M13 2 L9 1 L11 6 Z" fill="#e84a8a"/><path d="M4 9 Q7 11.5 10 9" stroke="#6b3b10" stroke-width="1" fill="none"/></svg></div>
<div class="a" style="left:1805px;top:1006px;width:107px;height:18px;background:#3aaaee;border-radius:2px"></div>
<div class="a t" style="left:1810.5px;top:1009.84px;font-size:12px;line-height:12px;color:#0e2a3d;">Tips and Tricks</div>
<div class="a" style="left:1893px;top:1008px;width:14px;height:14px"><svg width="14" height="14"><path d="M12.5 1.5 Q8 2 5 7 L7 9 Q12 6 12.5 1.5 Z" fill="#e8e8e8"/><circle cx="9.3" cy="4.7" r="1.2" fill="#3aaaee"/><path d="M5 7 L2 7.5 L4 5.5 Z M7 9 L6.5 12 L8.5 10 Z" fill="#e84a4a"/><path d="M4.5 9.5 L2 12 L3.5 10.5" stroke="#f2a030" stroke-width="1.5"/></svg></div>
</body></html>
